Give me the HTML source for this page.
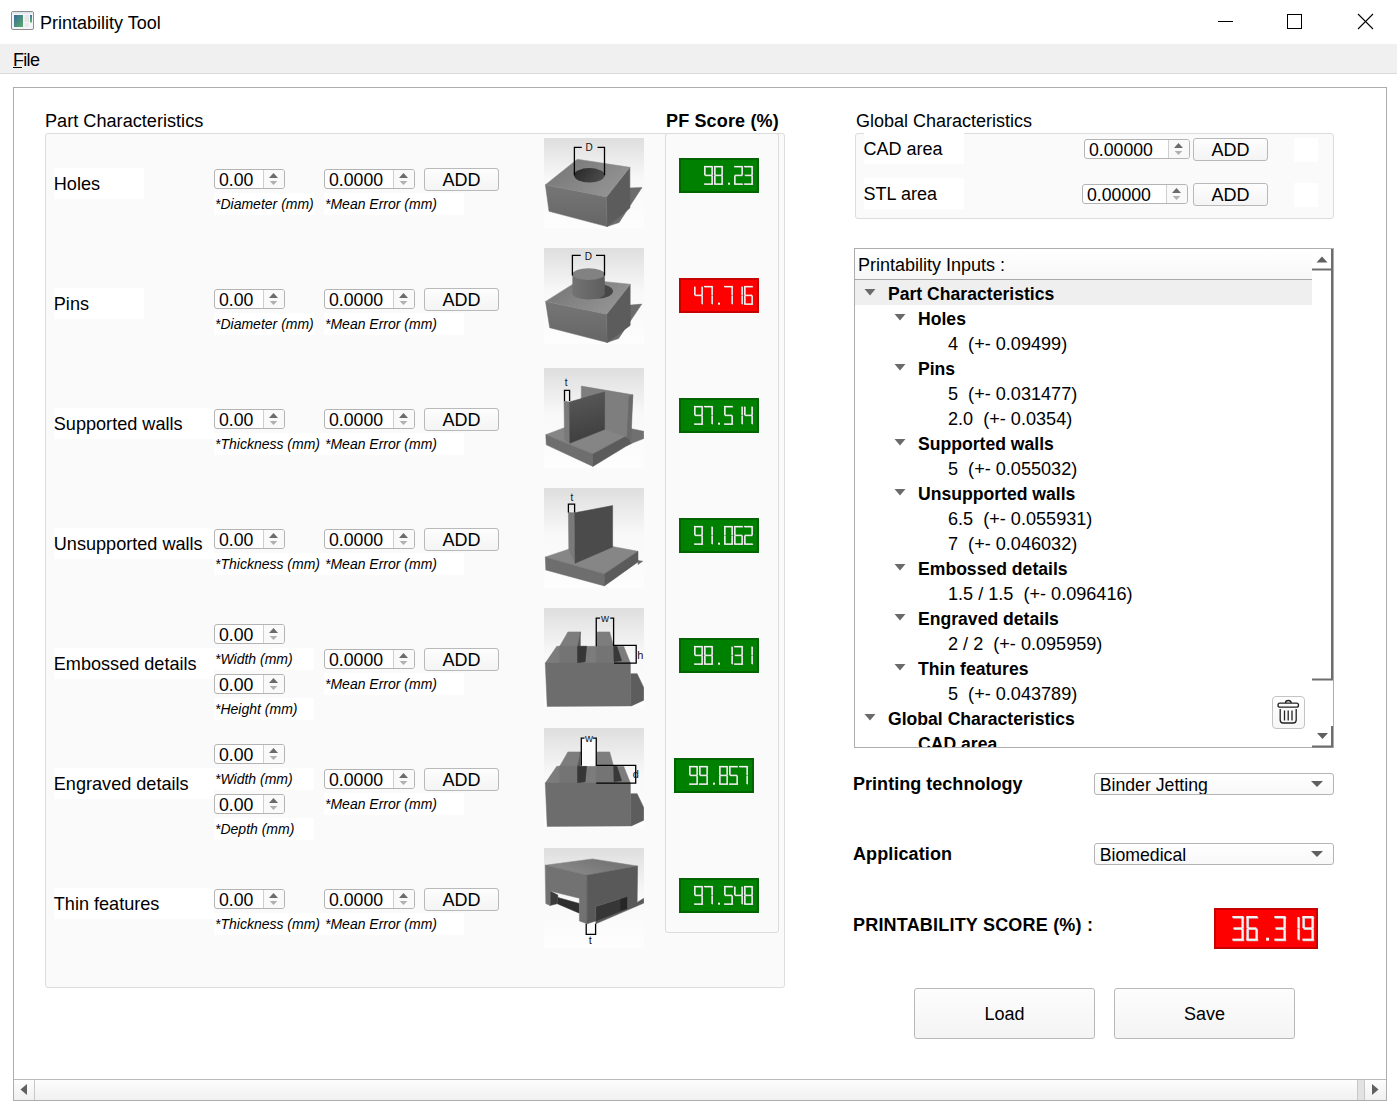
<!DOCTYPE html><html><head><meta charset="utf-8"><style>
html,body{margin:0;padding:0;}
body{width:1397px;height:1113px;position:relative;overflow:hidden;background:#fff;font-family:'Liberation Sans',sans-serif;}
.t{position:absolute;white-space:nowrap;line-height:normal;font-family:'Liberation Sans',sans-serif;}
.spin{position:absolute;box-sizing:border-box;border:1px solid #b4b4b4;border-radius:3px;background:#fff;}
.btn{position:absolute;box-sizing:border-box;border:1px solid #b9b9b9;background:linear-gradient(#fdfdfd,#f4f4f4);text-align:center;color:#000;font-family:'Liberation Sans',sans-serif;}
</style></head><body>

<svg style="position:absolute;left:0;top:0" width="1397" height="44"><defs><linearGradient id="ig" x1="0" y1="0" x2="1" y2="1"><stop offset="0" stop-color="#3a6a9c"/><stop offset="1" stop-color="#58ad68"/></linearGradient><linearGradient id="ig2" x1="0" y1="0" x2="0" y2="1"><stop offset="0" stop-color="#3f6fa8"/><stop offset="1" stop-color="#5fb86a"/></linearGradient></defs><rect x="11.5" y="11.5" width="22" height="18" rx="1.5" fill="#f4f5f8" stroke="#8c8c8c" stroke-width="1"/><rect x="12" y="12" width="21" height="1.6" fill="#dde3ea"/><rect x="14" y="15" width="9" height="12" fill="url(#ig)"/><rect x="24.5" y="15" width="4.5" height="7" fill="#e6e6e6"/><rect x="24.5" y="23" width="4.5" height="4" fill="#e9e9e9"/><rect x="30" y="15" width="2" height="7.5" fill="url(#ig2)"/><line x1="1218" y1="21.5" x2="1233" y2="21.5" stroke="#000" stroke-width="1"/><rect x="1287.5" y="14.5" width="14" height="14" fill="none" stroke="#000" stroke-width="1"/><line x1="1358" y1="14" x2="1373" y2="29" stroke="#000" stroke-width="1.1"/><line x1="1373" y1="14" x2="1358" y2="29" stroke="#000" stroke-width="1.1"/></svg>
<div class="t" style="left:40px;top:13px;font-size:18px;font-weight:normal;font-style:normal;color:#000;">Printability Tool</div>
<div style="position:absolute;left:0px;top:44px;width:1397px;height:30px;box-sizing:border-box;background:#f0f0f0;border-bottom:1px solid #d9d9d9"></div>
<div class="t" style="left:13px;top:50px;font-size:18px;font-weight:normal;font-style:normal;color:#000;letter-spacing:-0.7px">File</div>
<div style="position:absolute;left:13px;top:67px;width:9px;height:1px;box-sizing:border-box;background:#000"></div>
<div style="position:absolute;left:13px;top:87px;width:1374px;height:1014px;box-sizing:border-box;border:1px solid #adadad;background:#fff"></div>
<div style="position:absolute;left:14px;top:1079px;width:1372px;height:21px;box-sizing:border-box;border-top:1px solid #b9b9b9;background:linear-gradient(#fdfdfd,#f0f0f0)"></div>
<div style="position:absolute;left:34px;top:1080px;width:1px;height:20px;box-sizing:border-box;background:#c8c8c8"></div>
<div style="position:absolute;left:1357px;top:1080px;width:8px;height:20px;box-sizing:border-box;background:#e2e2e2;border-left:1px solid #c8c8c8;border-right:1px solid #c8c8c8"></div>
<svg style="position:absolute;left:0;top:0;overflow:visible" width="1" height="1"><polygon points="20.5,1089.5 27,1084 27,1095" fill="#606060"/><polygon points="1378.5,1089.5 1372,1084 1372,1095" fill="#606060"/></svg>
<div class="t" style="left:45px;top:111px;font-size:18.15px;font-weight:normal;font-style:normal;color:#000;">Part Characteristics</div>
<div style="position:absolute;left:45px;top:133px;width:740px;height:855px;box-sizing:border-box;border:1px solid #dcdcdc;border-radius:3px;background:#fafafa"></div>
<div class="t" style="left:666px;top:111px;font-size:18px;font-weight:bold;font-style:normal;color:#000;letter-spacing:0.15px">PF Score (%)</div>
<div style="position:absolute;left:665px;top:133px;width:114px;height:800px;box-sizing:border-box;border:1px solid #dcdcdc;border-radius:3px;background:#fafafa"></div>
<div style="position:absolute;left:54px;top:168px;width:90px;height:31px;box-sizing:border-box;background:#fff"></div>
<div class="t" style="left:53.8px;top:174px;font-size:18.1px;font-weight:normal;font-style:normal;color:#000;">Holes</div>
<div style="position:absolute;left:214px;top:193px;width:100px;height:22px;box-sizing:border-box;background:#fff"></div>
<div class="spin" style="left:214px;top:169px;width:71px;height:20px"></div>
<div style="position:absolute;left:263px;top:170px;width:1px;height:18px;background:#cfcfcf"></div>
<div style="position:absolute;left:264px;top:170px;width:20px;height:18px;background:#f9f9f9;border-radius:0 2px 2px 0"></div>
<svg style="position:absolute;left:0;top:0;overflow:visible" width="1" height="1"><polygon points="269.0,178.0 278.0,178.0 273.5,173.0" fill="#6a6a6a"/><polygon points="269.7,181.0 277.3,181.0 273.5,185.0" fill="#b0b0b0"/></svg>
<div class="t" style="left:219px;top:170px;font-size:17.7px;font-weight:normal;font-style:normal;color:#000;">0.00</div>
<div class="t" style="left:215px;top:196px;font-size:14px;font-weight:normal;font-style:italic;color:#000;">*Diameter (mm)</div>
<div style="position:absolute;left:324px;top:193px;width:140px;height:22px;box-sizing:border-box;background:#fff"></div>
<div class="spin" style="left:324px;top:169px;width:91px;height:20px"></div>
<div style="position:absolute;left:393px;top:170px;width:1px;height:18px;background:#cfcfcf"></div>
<div style="position:absolute;left:394px;top:170px;width:20px;height:18px;background:#f9f9f9;border-radius:0 2px 2px 0"></div>
<svg style="position:absolute;left:0;top:0;overflow:visible" width="1" height="1"><polygon points="399.0,178.0 408.0,178.0 403.5,173.0" fill="#6a6a6a"/><polygon points="399.7,181.0 407.3,181.0 403.5,185.0" fill="#b0b0b0"/></svg>
<div class="t" style="left:329px;top:170px;font-size:17.7px;font-weight:normal;font-style:normal;color:#000;">0.0000</div>
<div class="t" style="left:325px;top:196px;font-size:14px;font-weight:normal;font-style:italic;color:#000;">*Mean Error (mm)</div>
<div class="btn" style="left:424px;top:168px;width:75px;height:23px;line-height:23px;font-size:18px;border-radius:3px">ADD</div>
<div style="position:absolute;left:679px;top:158px;width:80px;height:35px;box-sizing:border-box;background:#008000;border:2px solid rgba(0,0,0,0.22)"></div>
<svg style="position:absolute;left:679px;top:158px" width="80" height="35"><line x1="25.50" y1="8.97" x2="34.15" y2="8.97" stroke="#c4c0c8" stroke-width="1.08"/><line x1="33.47" y1="8.97" x2="33.47" y2="17.42" stroke="#c4c0c8" stroke-width="1.08"/><line x1="33.47" y1="18.02" x2="33.47" y2="26.47" stroke="#c4c0c8" stroke-width="1.08"/><line x1="25.50" y1="26.47" x2="34.15" y2="26.47" stroke="#c4c0c8" stroke-width="1.08"/><line x1="26.17" y1="8.97" x2="26.17" y2="17.42" stroke="#c4c0c8" stroke-width="1.08"/><line x1="26.17" y1="17.72" x2="33.47" y2="17.72" stroke="#c4c0c8" stroke-width="1.08"/><line x1="25.02" y1="8.50" x2="33.67" y2="8.50" stroke="#f3f3f3" stroke-width="1.22"/><line x1="33.00" y1="8.50" x2="33.00" y2="16.95" stroke="#f3f3f3" stroke-width="1.22"/><line x1="33.00" y1="17.55" x2="33.00" y2="26.00" stroke="#f3f3f3" stroke-width="1.22"/><line x1="25.02" y1="26.00" x2="33.67" y2="26.00" stroke="#f3f3f3" stroke-width="1.22"/><line x1="25.70" y1="8.50" x2="25.70" y2="16.95" stroke="#f3f3f3" stroke-width="1.22"/><line x1="25.70" y1="17.25" x2="33.00" y2="17.25" stroke="#f3f3f3" stroke-width="1.22"/><line x1="35.50" y1="8.97" x2="44.15" y2="8.97" stroke="#c4c0c8" stroke-width="1.08"/><line x1="43.47" y1="8.97" x2="43.47" y2="17.42" stroke="#c4c0c8" stroke-width="1.08"/><line x1="43.47" y1="18.02" x2="43.47" y2="26.47" stroke="#c4c0c8" stroke-width="1.08"/><line x1="35.50" y1="26.47" x2="44.15" y2="26.47" stroke="#c4c0c8" stroke-width="1.08"/><line x1="36.17" y1="18.02" x2="36.17" y2="26.47" stroke="#c4c0c8" stroke-width="1.08"/><line x1="36.17" y1="8.97" x2="36.17" y2="17.42" stroke="#c4c0c8" stroke-width="1.08"/><line x1="36.17" y1="17.72" x2="43.47" y2="17.72" stroke="#c4c0c8" stroke-width="1.08"/><line x1="35.03" y1="8.50" x2="43.67" y2="8.50" stroke="#f3f3f3" stroke-width="1.22"/><line x1="43.00" y1="8.50" x2="43.00" y2="16.95" stroke="#f3f3f3" stroke-width="1.22"/><line x1="43.00" y1="17.55" x2="43.00" y2="26.00" stroke="#f3f3f3" stroke-width="1.22"/><line x1="35.03" y1="26.00" x2="43.67" y2="26.00" stroke="#f3f3f3" stroke-width="1.22"/><line x1="35.70" y1="17.55" x2="35.70" y2="26.00" stroke="#f3f3f3" stroke-width="1.22"/><line x1="35.70" y1="8.50" x2="35.70" y2="16.95" stroke="#f3f3f3" stroke-width="1.22"/><line x1="35.70" y1="17.25" x2="43.00" y2="17.25" stroke="#f3f3f3" stroke-width="1.22"/><rect x="49.00" y="24.68" width="2" height="2" fill="#f3f3f3"/><line x1="55.50" y1="8.97" x2="64.15" y2="8.97" stroke="#c4c0c8" stroke-width="1.08"/><line x1="63.47" y1="8.97" x2="63.47" y2="17.42" stroke="#c4c0c8" stroke-width="1.08"/><line x1="56.17" y1="17.72" x2="63.47" y2="17.72" stroke="#c4c0c8" stroke-width="1.08"/><line x1="56.17" y1="18.02" x2="56.17" y2="26.47" stroke="#c4c0c8" stroke-width="1.08"/><line x1="55.50" y1="26.47" x2="64.15" y2="26.47" stroke="#c4c0c8" stroke-width="1.08"/><line x1="55.03" y1="8.50" x2="63.67" y2="8.50" stroke="#f3f3f3" stroke-width="1.22"/><line x1="63.00" y1="8.50" x2="63.00" y2="16.95" stroke="#f3f3f3" stroke-width="1.22"/><line x1="55.70" y1="17.25" x2="63.00" y2="17.25" stroke="#f3f3f3" stroke-width="1.22"/><line x1="55.70" y1="17.55" x2="55.70" y2="26.00" stroke="#f3f3f3" stroke-width="1.22"/><line x1="55.03" y1="26.00" x2="63.67" y2="26.00" stroke="#f3f3f3" stroke-width="1.22"/><line x1="65.50" y1="8.97" x2="74.15" y2="8.97" stroke="#c4c0c8" stroke-width="1.08"/><line x1="73.47" y1="8.97" x2="73.47" y2="17.42" stroke="#c4c0c8" stroke-width="1.08"/><line x1="66.17" y1="17.72" x2="73.47" y2="17.72" stroke="#c4c0c8" stroke-width="1.08"/><line x1="73.47" y1="18.02" x2="73.47" y2="26.47" stroke="#c4c0c8" stroke-width="1.08"/><line x1="65.50" y1="26.47" x2="74.15" y2="26.47" stroke="#c4c0c8" stroke-width="1.08"/><line x1="65.03" y1="8.50" x2="73.67" y2="8.50" stroke="#f3f3f3" stroke-width="1.22"/><line x1="73.00" y1="8.50" x2="73.00" y2="16.95" stroke="#f3f3f3" stroke-width="1.22"/><line x1="65.70" y1="17.25" x2="73.00" y2="17.25" stroke="#f3f3f3" stroke-width="1.22"/><line x1="73.00" y1="17.55" x2="73.00" y2="26.00" stroke="#f3f3f3" stroke-width="1.22"/><line x1="65.03" y1="26.00" x2="73.67" y2="26.00" stroke="#f3f3f3" stroke-width="1.22"/></svg>
<div style="position:absolute;left:54px;top:288px;width:90px;height:31px;box-sizing:border-box;background:#fff"></div>
<div class="t" style="left:53.8px;top:294px;font-size:18.1px;font-weight:normal;font-style:normal;color:#000;">Pins</div>
<div style="position:absolute;left:214px;top:313px;width:100px;height:22px;box-sizing:border-box;background:#fff"></div>
<div class="spin" style="left:214px;top:289px;width:71px;height:20px"></div>
<div style="position:absolute;left:263px;top:290px;width:1px;height:18px;background:#cfcfcf"></div>
<div style="position:absolute;left:264px;top:290px;width:20px;height:18px;background:#f9f9f9;border-radius:0 2px 2px 0"></div>
<svg style="position:absolute;left:0;top:0;overflow:visible" width="1" height="1"><polygon points="269.0,298.0 278.0,298.0 273.5,293.0" fill="#6a6a6a"/><polygon points="269.7,301.0 277.3,301.0 273.5,305.0" fill="#b0b0b0"/></svg>
<div class="t" style="left:219px;top:290px;font-size:17.7px;font-weight:normal;font-style:normal;color:#000;">0.00</div>
<div class="t" style="left:215px;top:316px;font-size:14px;font-weight:normal;font-style:italic;color:#000;">*Diameter (mm)</div>
<div style="position:absolute;left:324px;top:313px;width:140px;height:22px;box-sizing:border-box;background:#fff"></div>
<div class="spin" style="left:324px;top:289px;width:91px;height:20px"></div>
<div style="position:absolute;left:393px;top:290px;width:1px;height:18px;background:#cfcfcf"></div>
<div style="position:absolute;left:394px;top:290px;width:20px;height:18px;background:#f9f9f9;border-radius:0 2px 2px 0"></div>
<svg style="position:absolute;left:0;top:0;overflow:visible" width="1" height="1"><polygon points="399.0,298.0 408.0,298.0 403.5,293.0" fill="#6a6a6a"/><polygon points="399.7,301.0 407.3,301.0 403.5,305.0" fill="#b0b0b0"/></svg>
<div class="t" style="left:329px;top:290px;font-size:17.7px;font-weight:normal;font-style:normal;color:#000;">0.0000</div>
<div class="t" style="left:325px;top:316px;font-size:14px;font-weight:normal;font-style:italic;color:#000;">*Mean Error (mm)</div>
<div class="btn" style="left:424px;top:288px;width:75px;height:23px;line-height:23px;font-size:18px;border-radius:3px">ADD</div>
<div style="position:absolute;left:679px;top:278px;width:80px;height:35px;box-sizing:border-box;background:#ff0000;border:2px solid rgba(0,0,0,0.22)"></div>
<svg style="position:absolute;left:679px;top:278px" width="80" height="35"><line x1="16.17" y1="8.97" x2="16.17" y2="17.42" stroke="#c4c0c8" stroke-width="1.08"/><line x1="16.17" y1="17.72" x2="23.47" y2="17.72" stroke="#c4c0c8" stroke-width="1.08"/><line x1="23.47" y1="8.97" x2="23.47" y2="17.42" stroke="#c4c0c8" stroke-width="1.08"/><line x1="23.47" y1="18.02" x2="23.47" y2="26.47" stroke="#c4c0c8" stroke-width="1.08"/><line x1="15.70" y1="8.50" x2="15.70" y2="16.95" stroke="#f3f3f3" stroke-width="1.22"/><line x1="15.70" y1="17.25" x2="23.00" y2="17.25" stroke="#f3f3f3" stroke-width="1.22"/><line x1="23.00" y1="8.50" x2="23.00" y2="16.95" stroke="#f3f3f3" stroke-width="1.22"/><line x1="23.00" y1="17.55" x2="23.00" y2="26.00" stroke="#f3f3f3" stroke-width="1.22"/><line x1="25.50" y1="8.97" x2="34.15" y2="8.97" stroke="#c4c0c8" stroke-width="1.08"/><line x1="33.47" y1="8.97" x2="33.47" y2="17.42" stroke="#c4c0c8" stroke-width="1.08"/><line x1="33.47" y1="18.02" x2="33.47" y2="26.47" stroke="#c4c0c8" stroke-width="1.08"/><line x1="25.02" y1="8.50" x2="33.67" y2="8.50" stroke="#f3f3f3" stroke-width="1.22"/><line x1="33.00" y1="8.50" x2="33.00" y2="16.95" stroke="#f3f3f3" stroke-width="1.22"/><line x1="33.00" y1="17.55" x2="33.00" y2="26.00" stroke="#f3f3f3" stroke-width="1.22"/><rect x="39.00" y="24.68" width="2" height="2" fill="#f3f3f3"/><line x1="45.50" y1="8.97" x2="54.15" y2="8.97" stroke="#c4c0c8" stroke-width="1.08"/><line x1="53.47" y1="8.97" x2="53.47" y2="17.42" stroke="#c4c0c8" stroke-width="1.08"/><line x1="53.47" y1="18.02" x2="53.47" y2="26.47" stroke="#c4c0c8" stroke-width="1.08"/><line x1="45.03" y1="8.50" x2="53.67" y2="8.50" stroke="#f3f3f3" stroke-width="1.22"/><line x1="53.00" y1="8.50" x2="53.00" y2="16.95" stroke="#f3f3f3" stroke-width="1.22"/><line x1="53.00" y1="17.55" x2="53.00" y2="26.00" stroke="#f3f3f3" stroke-width="1.22"/><line x1="63.47" y1="8.97" x2="63.47" y2="17.42" stroke="#c4c0c8" stroke-width="1.08"/><line x1="63.47" y1="18.02" x2="63.47" y2="26.47" stroke="#c4c0c8" stroke-width="1.08"/><line x1="63.00" y1="8.50" x2="63.00" y2="16.95" stroke="#f3f3f3" stroke-width="1.22"/><line x1="63.00" y1="17.55" x2="63.00" y2="26.00" stroke="#f3f3f3" stroke-width="1.22"/><line x1="65.50" y1="8.97" x2="74.15" y2="8.97" stroke="#c4c0c8" stroke-width="1.08"/><line x1="66.17" y1="8.97" x2="66.17" y2="17.42" stroke="#c4c0c8" stroke-width="1.08"/><line x1="66.17" y1="17.72" x2="73.47" y2="17.72" stroke="#c4c0c8" stroke-width="1.08"/><line x1="66.17" y1="18.02" x2="66.17" y2="26.47" stroke="#c4c0c8" stroke-width="1.08"/><line x1="65.50" y1="26.47" x2="74.15" y2="26.47" stroke="#c4c0c8" stroke-width="1.08"/><line x1="73.47" y1="18.02" x2="73.47" y2="26.47" stroke="#c4c0c8" stroke-width="1.08"/><line x1="65.03" y1="8.50" x2="73.67" y2="8.50" stroke="#f3f3f3" stroke-width="1.22"/><line x1="65.70" y1="8.50" x2="65.70" y2="16.95" stroke="#f3f3f3" stroke-width="1.22"/><line x1="65.70" y1="17.25" x2="73.00" y2="17.25" stroke="#f3f3f3" stroke-width="1.22"/><line x1="65.70" y1="17.55" x2="65.70" y2="26.00" stroke="#f3f3f3" stroke-width="1.22"/><line x1="65.03" y1="26.00" x2="73.67" y2="26.00" stroke="#f3f3f3" stroke-width="1.22"/><line x1="73.00" y1="17.55" x2="73.00" y2="26.00" stroke="#f3f3f3" stroke-width="1.22"/></svg>
<div style="position:absolute;left:54px;top:408px;width:160px;height:31px;box-sizing:border-box;background:#fff"></div>
<div class="t" style="left:53.8px;top:414px;font-size:18.1px;font-weight:normal;font-style:normal;color:#000;">Supported walls</div>
<div style="position:absolute;left:214px;top:433px;width:110px;height:22px;box-sizing:border-box;background:#fff"></div>
<div class="spin" style="left:214px;top:409px;width:71px;height:20px"></div>
<div style="position:absolute;left:263px;top:410px;width:1px;height:18px;background:#cfcfcf"></div>
<div style="position:absolute;left:264px;top:410px;width:20px;height:18px;background:#f9f9f9;border-radius:0 2px 2px 0"></div>
<svg style="position:absolute;left:0;top:0;overflow:visible" width="1" height="1"><polygon points="269.0,418.0 278.0,418.0 273.5,413.0" fill="#6a6a6a"/><polygon points="269.7,421.0 277.3,421.0 273.5,425.0" fill="#b0b0b0"/></svg>
<div class="t" style="left:219px;top:410px;font-size:17.7px;font-weight:normal;font-style:normal;color:#000;">0.00</div>
<div class="t" style="left:215px;top:436px;font-size:14px;font-weight:normal;font-style:italic;color:#000;">*Thickness (mm)</div>
<div style="position:absolute;left:324px;top:433px;width:140px;height:22px;box-sizing:border-box;background:#fff"></div>
<div class="spin" style="left:324px;top:409px;width:91px;height:20px"></div>
<div style="position:absolute;left:393px;top:410px;width:1px;height:18px;background:#cfcfcf"></div>
<div style="position:absolute;left:394px;top:410px;width:20px;height:18px;background:#f9f9f9;border-radius:0 2px 2px 0"></div>
<svg style="position:absolute;left:0;top:0;overflow:visible" width="1" height="1"><polygon points="399.0,418.0 408.0,418.0 403.5,413.0" fill="#6a6a6a"/><polygon points="399.7,421.0 407.3,421.0 403.5,425.0" fill="#b0b0b0"/></svg>
<div class="t" style="left:329px;top:410px;font-size:17.7px;font-weight:normal;font-style:normal;color:#000;">0.0000</div>
<div class="t" style="left:325px;top:436px;font-size:14px;font-weight:normal;font-style:italic;color:#000;">*Mean Error (mm)</div>
<div class="btn" style="left:424px;top:408px;width:75px;height:23px;line-height:23px;font-size:18px;border-radius:3px">ADD</div>
<div style="position:absolute;left:679px;top:398px;width:80px;height:35px;box-sizing:border-box;background:#008000;border:2px solid rgba(0,0,0,0.22)"></div>
<svg style="position:absolute;left:679px;top:398px" width="80" height="35"><line x1="15.50" y1="8.97" x2="24.15" y2="8.97" stroke="#c4c0c8" stroke-width="1.08"/><line x1="23.47" y1="8.97" x2="23.47" y2="17.42" stroke="#c4c0c8" stroke-width="1.08"/><line x1="23.47" y1="18.02" x2="23.47" y2="26.47" stroke="#c4c0c8" stroke-width="1.08"/><line x1="15.50" y1="26.47" x2="24.15" y2="26.47" stroke="#c4c0c8" stroke-width="1.08"/><line x1="16.17" y1="8.97" x2="16.17" y2="17.42" stroke="#c4c0c8" stroke-width="1.08"/><line x1="16.17" y1="17.72" x2="23.47" y2="17.72" stroke="#c4c0c8" stroke-width="1.08"/><line x1="15.02" y1="8.50" x2="23.68" y2="8.50" stroke="#f3f3f3" stroke-width="1.22"/><line x1="23.00" y1="8.50" x2="23.00" y2="16.95" stroke="#f3f3f3" stroke-width="1.22"/><line x1="23.00" y1="17.55" x2="23.00" y2="26.00" stroke="#f3f3f3" stroke-width="1.22"/><line x1="15.02" y1="26.00" x2="23.68" y2="26.00" stroke="#f3f3f3" stroke-width="1.22"/><line x1="15.70" y1="8.50" x2="15.70" y2="16.95" stroke="#f3f3f3" stroke-width="1.22"/><line x1="15.70" y1="17.25" x2="23.00" y2="17.25" stroke="#f3f3f3" stroke-width="1.22"/><line x1="25.50" y1="8.97" x2="34.15" y2="8.97" stroke="#c4c0c8" stroke-width="1.08"/><line x1="33.47" y1="8.97" x2="33.47" y2="17.42" stroke="#c4c0c8" stroke-width="1.08"/><line x1="33.47" y1="18.02" x2="33.47" y2="26.47" stroke="#c4c0c8" stroke-width="1.08"/><line x1="25.02" y1="8.50" x2="33.67" y2="8.50" stroke="#f3f3f3" stroke-width="1.22"/><line x1="33.00" y1="8.50" x2="33.00" y2="16.95" stroke="#f3f3f3" stroke-width="1.22"/><line x1="33.00" y1="17.55" x2="33.00" y2="26.00" stroke="#f3f3f3" stroke-width="1.22"/><rect x="39.00" y="24.68" width="2" height="2" fill="#f3f3f3"/><line x1="45.50" y1="8.97" x2="54.15" y2="8.97" stroke="#c4c0c8" stroke-width="1.08"/><line x1="46.17" y1="8.97" x2="46.17" y2="17.42" stroke="#c4c0c8" stroke-width="1.08"/><line x1="46.17" y1="17.72" x2="53.47" y2="17.72" stroke="#c4c0c8" stroke-width="1.08"/><line x1="53.47" y1="18.02" x2="53.47" y2="26.47" stroke="#c4c0c8" stroke-width="1.08"/><line x1="45.50" y1="26.47" x2="54.15" y2="26.47" stroke="#c4c0c8" stroke-width="1.08"/><line x1="45.03" y1="8.50" x2="53.67" y2="8.50" stroke="#f3f3f3" stroke-width="1.22"/><line x1="45.70" y1="8.50" x2="45.70" y2="16.95" stroke="#f3f3f3" stroke-width="1.22"/><line x1="45.70" y1="17.25" x2="53.00" y2="17.25" stroke="#f3f3f3" stroke-width="1.22"/><line x1="53.00" y1="17.55" x2="53.00" y2="26.00" stroke="#f3f3f3" stroke-width="1.22"/><line x1="45.03" y1="26.00" x2="53.67" y2="26.00" stroke="#f3f3f3" stroke-width="1.22"/><line x1="63.47" y1="8.97" x2="63.47" y2="17.42" stroke="#c4c0c8" stroke-width="1.08"/><line x1="63.47" y1="18.02" x2="63.47" y2="26.47" stroke="#c4c0c8" stroke-width="1.08"/><line x1="63.00" y1="8.50" x2="63.00" y2="16.95" stroke="#f3f3f3" stroke-width="1.22"/><line x1="63.00" y1="17.55" x2="63.00" y2="26.00" stroke="#f3f3f3" stroke-width="1.22"/><line x1="66.17" y1="8.97" x2="66.17" y2="17.42" stroke="#c4c0c8" stroke-width="1.08"/><line x1="66.17" y1="17.72" x2="73.47" y2="17.72" stroke="#c4c0c8" stroke-width="1.08"/><line x1="73.47" y1="8.97" x2="73.47" y2="17.42" stroke="#c4c0c8" stroke-width="1.08"/><line x1="73.47" y1="18.02" x2="73.47" y2="26.47" stroke="#c4c0c8" stroke-width="1.08"/><line x1="65.70" y1="8.50" x2="65.70" y2="16.95" stroke="#f3f3f3" stroke-width="1.22"/><line x1="65.70" y1="17.25" x2="73.00" y2="17.25" stroke="#f3f3f3" stroke-width="1.22"/><line x1="73.00" y1="8.50" x2="73.00" y2="16.95" stroke="#f3f3f3" stroke-width="1.22"/><line x1="73.00" y1="17.55" x2="73.00" y2="26.00" stroke="#f3f3f3" stroke-width="1.22"/></svg>
<div style="position:absolute;left:54px;top:528px;width:160px;height:31px;box-sizing:border-box;background:#fff"></div>
<div class="t" style="left:53.8px;top:534px;font-size:18.1px;font-weight:normal;font-style:normal;color:#000;">Unsupported walls</div>
<div style="position:absolute;left:214px;top:553px;width:110px;height:22px;box-sizing:border-box;background:#fff"></div>
<div class="spin" style="left:214px;top:529px;width:71px;height:20px"></div>
<div style="position:absolute;left:263px;top:530px;width:1px;height:18px;background:#cfcfcf"></div>
<div style="position:absolute;left:264px;top:530px;width:20px;height:18px;background:#f9f9f9;border-radius:0 2px 2px 0"></div>
<svg style="position:absolute;left:0;top:0;overflow:visible" width="1" height="1"><polygon points="269.0,538.0 278.0,538.0 273.5,533.0" fill="#6a6a6a"/><polygon points="269.7,541.0 277.3,541.0 273.5,545.0" fill="#b0b0b0"/></svg>
<div class="t" style="left:219px;top:530px;font-size:17.7px;font-weight:normal;font-style:normal;color:#000;">0.00</div>
<div class="t" style="left:215px;top:556px;font-size:14px;font-weight:normal;font-style:italic;color:#000;">*Thickness (mm)</div>
<div style="position:absolute;left:324px;top:553px;width:140px;height:22px;box-sizing:border-box;background:#fff"></div>
<div class="spin" style="left:324px;top:529px;width:91px;height:20px"></div>
<div style="position:absolute;left:393px;top:530px;width:1px;height:18px;background:#cfcfcf"></div>
<div style="position:absolute;left:394px;top:530px;width:20px;height:18px;background:#f9f9f9;border-radius:0 2px 2px 0"></div>
<svg style="position:absolute;left:0;top:0;overflow:visible" width="1" height="1"><polygon points="399.0,538.0 408.0,538.0 403.5,533.0" fill="#6a6a6a"/><polygon points="399.7,541.0 407.3,541.0 403.5,545.0" fill="#b0b0b0"/></svg>
<div class="t" style="left:329px;top:530px;font-size:17.7px;font-weight:normal;font-style:normal;color:#000;">0.0000</div>
<div class="t" style="left:325px;top:556px;font-size:14px;font-weight:normal;font-style:italic;color:#000;">*Mean Error (mm)</div>
<div class="btn" style="left:424px;top:528px;width:75px;height:23px;line-height:23px;font-size:18px;border-radius:3px">ADD</div>
<div style="position:absolute;left:679px;top:518px;width:80px;height:35px;box-sizing:border-box;background:#008000;border:2px solid rgba(0,0,0,0.22)"></div>
<svg style="position:absolute;left:679px;top:518px" width="80" height="35"><line x1="15.50" y1="8.97" x2="24.15" y2="8.97" stroke="#c4c0c8" stroke-width="1.08"/><line x1="23.47" y1="8.97" x2="23.47" y2="17.42" stroke="#c4c0c8" stroke-width="1.08"/><line x1="23.47" y1="18.02" x2="23.47" y2="26.47" stroke="#c4c0c8" stroke-width="1.08"/><line x1="15.50" y1="26.47" x2="24.15" y2="26.47" stroke="#c4c0c8" stroke-width="1.08"/><line x1="16.17" y1="8.97" x2="16.17" y2="17.42" stroke="#c4c0c8" stroke-width="1.08"/><line x1="16.17" y1="17.72" x2="23.47" y2="17.72" stroke="#c4c0c8" stroke-width="1.08"/><line x1="15.02" y1="8.50" x2="23.68" y2="8.50" stroke="#f3f3f3" stroke-width="1.22"/><line x1="23.00" y1="8.50" x2="23.00" y2="16.95" stroke="#f3f3f3" stroke-width="1.22"/><line x1="23.00" y1="17.55" x2="23.00" y2="26.00" stroke="#f3f3f3" stroke-width="1.22"/><line x1="15.02" y1="26.00" x2="23.68" y2="26.00" stroke="#f3f3f3" stroke-width="1.22"/><line x1="15.70" y1="8.50" x2="15.70" y2="16.95" stroke="#f3f3f3" stroke-width="1.22"/><line x1="15.70" y1="17.25" x2="23.00" y2="17.25" stroke="#f3f3f3" stroke-width="1.22"/><line x1="33.47" y1="8.97" x2="33.47" y2="17.42" stroke="#c4c0c8" stroke-width="1.08"/><line x1="33.47" y1="18.02" x2="33.47" y2="26.47" stroke="#c4c0c8" stroke-width="1.08"/><line x1="33.00" y1="8.50" x2="33.00" y2="16.95" stroke="#f3f3f3" stroke-width="1.22"/><line x1="33.00" y1="17.55" x2="33.00" y2="26.00" stroke="#f3f3f3" stroke-width="1.22"/><rect x="39.00" y="24.68" width="2" height="2" fill="#f3f3f3"/><line x1="45.50" y1="8.97" x2="54.15" y2="8.97" stroke="#c4c0c8" stroke-width="1.08"/><line x1="53.47" y1="8.97" x2="53.47" y2="17.42" stroke="#c4c0c8" stroke-width="1.08"/><line x1="53.47" y1="18.02" x2="53.47" y2="26.47" stroke="#c4c0c8" stroke-width="1.08"/><line x1="45.50" y1="26.47" x2="54.15" y2="26.47" stroke="#c4c0c8" stroke-width="1.08"/><line x1="46.17" y1="18.02" x2="46.17" y2="26.47" stroke="#c4c0c8" stroke-width="1.08"/><line x1="46.17" y1="8.97" x2="46.17" y2="17.42" stroke="#c4c0c8" stroke-width="1.08"/><line x1="45.03" y1="8.50" x2="53.67" y2="8.50" stroke="#f3f3f3" stroke-width="1.22"/><line x1="53.00" y1="8.50" x2="53.00" y2="16.95" stroke="#f3f3f3" stroke-width="1.22"/><line x1="53.00" y1="17.55" x2="53.00" y2="26.00" stroke="#f3f3f3" stroke-width="1.22"/><line x1="45.03" y1="26.00" x2="53.67" y2="26.00" stroke="#f3f3f3" stroke-width="1.22"/><line x1="45.70" y1="17.55" x2="45.70" y2="26.00" stroke="#f3f3f3" stroke-width="1.22"/><line x1="45.70" y1="8.50" x2="45.70" y2="16.95" stroke="#f3f3f3" stroke-width="1.22"/><line x1="55.50" y1="8.97" x2="64.15" y2="8.97" stroke="#c4c0c8" stroke-width="1.08"/><line x1="56.17" y1="8.97" x2="56.17" y2="17.42" stroke="#c4c0c8" stroke-width="1.08"/><line x1="56.17" y1="17.72" x2="63.47" y2="17.72" stroke="#c4c0c8" stroke-width="1.08"/><line x1="56.17" y1="18.02" x2="56.17" y2="26.47" stroke="#c4c0c8" stroke-width="1.08"/><line x1="55.50" y1="26.47" x2="64.15" y2="26.47" stroke="#c4c0c8" stroke-width="1.08"/><line x1="63.47" y1="18.02" x2="63.47" y2="26.47" stroke="#c4c0c8" stroke-width="1.08"/><line x1="55.03" y1="8.50" x2="63.67" y2="8.50" stroke="#f3f3f3" stroke-width="1.22"/><line x1="55.70" y1="8.50" x2="55.70" y2="16.95" stroke="#f3f3f3" stroke-width="1.22"/><line x1="55.70" y1="17.25" x2="63.00" y2="17.25" stroke="#f3f3f3" stroke-width="1.22"/><line x1="55.70" y1="17.55" x2="55.70" y2="26.00" stroke="#f3f3f3" stroke-width="1.22"/><line x1="55.03" y1="26.00" x2="63.67" y2="26.00" stroke="#f3f3f3" stroke-width="1.22"/><line x1="63.00" y1="17.55" x2="63.00" y2="26.00" stroke="#f3f3f3" stroke-width="1.22"/><line x1="65.50" y1="8.97" x2="74.15" y2="8.97" stroke="#c4c0c8" stroke-width="1.08"/><line x1="73.47" y1="8.97" x2="73.47" y2="17.42" stroke="#c4c0c8" stroke-width="1.08"/><line x1="66.17" y1="17.72" x2="73.47" y2="17.72" stroke="#c4c0c8" stroke-width="1.08"/><line x1="66.17" y1="18.02" x2="66.17" y2="26.47" stroke="#c4c0c8" stroke-width="1.08"/><line x1="65.50" y1="26.47" x2="74.15" y2="26.47" stroke="#c4c0c8" stroke-width="1.08"/><line x1="65.03" y1="8.50" x2="73.67" y2="8.50" stroke="#f3f3f3" stroke-width="1.22"/><line x1="73.00" y1="8.50" x2="73.00" y2="16.95" stroke="#f3f3f3" stroke-width="1.22"/><line x1="65.70" y1="17.25" x2="73.00" y2="17.25" stroke="#f3f3f3" stroke-width="1.22"/><line x1="65.70" y1="17.55" x2="65.70" y2="26.00" stroke="#f3f3f3" stroke-width="1.22"/><line x1="65.03" y1="26.00" x2="73.67" y2="26.00" stroke="#f3f3f3" stroke-width="1.22"/></svg>
<div style="position:absolute;left:54px;top:648px;width:160px;height:31px;box-sizing:border-box;background:#fff"></div>
<div class="t" style="left:53.8px;top:654px;font-size:18.1px;font-weight:normal;font-style:normal;color:#000;">Embossed details</div>
<div style="position:absolute;left:214px;top:648px;width:100px;height:22px;box-sizing:border-box;background:#fff"></div>
<div class="spin" style="left:214px;top:624px;width:71px;height:20px"></div>
<div style="position:absolute;left:263px;top:625px;width:1px;height:18px;background:#cfcfcf"></div>
<div style="position:absolute;left:264px;top:625px;width:20px;height:18px;background:#f9f9f9;border-radius:0 2px 2px 0"></div>
<svg style="position:absolute;left:0;top:0;overflow:visible" width="1" height="1"><polygon points="269.0,633.0 278.0,633.0 273.5,628.0" fill="#6a6a6a"/><polygon points="269.7,636.0 277.3,636.0 273.5,640.0" fill="#b0b0b0"/></svg>
<div class="t" style="left:219px;top:625px;font-size:17.7px;font-weight:normal;font-style:normal;color:#000;">0.00</div>
<div class="t" style="left:215px;top:651px;font-size:14px;font-weight:normal;font-style:italic;color:#000;">*Width (mm)</div>
<div style="position:absolute;left:214px;top:698px;width:100px;height:22px;box-sizing:border-box;background:#fff"></div>
<div class="spin" style="left:214px;top:674px;width:71px;height:20px"></div>
<div style="position:absolute;left:263px;top:675px;width:1px;height:18px;background:#cfcfcf"></div>
<div style="position:absolute;left:264px;top:675px;width:20px;height:18px;background:#f9f9f9;border-radius:0 2px 2px 0"></div>
<svg style="position:absolute;left:0;top:0;overflow:visible" width="1" height="1"><polygon points="269.0,683.0 278.0,683.0 273.5,678.0" fill="#6a6a6a"/><polygon points="269.7,686.0 277.3,686.0 273.5,690.0" fill="#b0b0b0"/></svg>
<div class="t" style="left:219px;top:675px;font-size:17.7px;font-weight:normal;font-style:normal;color:#000;">0.00</div>
<div class="t" style="left:215px;top:701px;font-size:14px;font-weight:normal;font-style:italic;color:#000;">*Height (mm)</div>
<div style="position:absolute;left:324px;top:673px;width:140px;height:22px;box-sizing:border-box;background:#fff"></div>
<div class="spin" style="left:324px;top:649px;width:91px;height:20px"></div>
<div style="position:absolute;left:393px;top:650px;width:1px;height:18px;background:#cfcfcf"></div>
<div style="position:absolute;left:394px;top:650px;width:20px;height:18px;background:#f9f9f9;border-radius:0 2px 2px 0"></div>
<svg style="position:absolute;left:0;top:0;overflow:visible" width="1" height="1"><polygon points="399.0,658.0 408.0,658.0 403.5,653.0" fill="#6a6a6a"/><polygon points="399.7,661.0 407.3,661.0 403.5,665.0" fill="#b0b0b0"/></svg>
<div class="t" style="left:329px;top:650px;font-size:17.7px;font-weight:normal;font-style:normal;color:#000;">0.0000</div>
<div class="t" style="left:325px;top:676px;font-size:14px;font-weight:normal;font-style:italic;color:#000;">*Mean Error (mm)</div>
<div class="btn" style="left:424px;top:648px;width:75px;height:23px;line-height:23px;font-size:18px;border-radius:3px">ADD</div>
<div style="position:absolute;left:679px;top:638px;width:80px;height:35px;box-sizing:border-box;background:#008000;border:2px solid rgba(0,0,0,0.22)"></div>
<svg style="position:absolute;left:679px;top:638px" width="80" height="35"><line x1="15.50" y1="8.97" x2="24.15" y2="8.97" stroke="#c4c0c8" stroke-width="1.08"/><line x1="23.47" y1="8.97" x2="23.47" y2="17.42" stroke="#c4c0c8" stroke-width="1.08"/><line x1="23.47" y1="18.02" x2="23.47" y2="26.47" stroke="#c4c0c8" stroke-width="1.08"/><line x1="15.50" y1="26.47" x2="24.15" y2="26.47" stroke="#c4c0c8" stroke-width="1.08"/><line x1="16.17" y1="8.97" x2="16.17" y2="17.42" stroke="#c4c0c8" stroke-width="1.08"/><line x1="16.17" y1="17.72" x2="23.47" y2="17.72" stroke="#c4c0c8" stroke-width="1.08"/><line x1="15.02" y1="8.50" x2="23.68" y2="8.50" stroke="#f3f3f3" stroke-width="1.22"/><line x1="23.00" y1="8.50" x2="23.00" y2="16.95" stroke="#f3f3f3" stroke-width="1.22"/><line x1="23.00" y1="17.55" x2="23.00" y2="26.00" stroke="#f3f3f3" stroke-width="1.22"/><line x1="15.02" y1="26.00" x2="23.68" y2="26.00" stroke="#f3f3f3" stroke-width="1.22"/><line x1="15.70" y1="8.50" x2="15.70" y2="16.95" stroke="#f3f3f3" stroke-width="1.22"/><line x1="15.70" y1="17.25" x2="23.00" y2="17.25" stroke="#f3f3f3" stroke-width="1.22"/><line x1="25.50" y1="8.97" x2="34.15" y2="8.97" stroke="#c4c0c8" stroke-width="1.08"/><line x1="33.47" y1="8.97" x2="33.47" y2="17.42" stroke="#c4c0c8" stroke-width="1.08"/><line x1="33.47" y1="18.02" x2="33.47" y2="26.47" stroke="#c4c0c8" stroke-width="1.08"/><line x1="25.50" y1="26.47" x2="34.15" y2="26.47" stroke="#c4c0c8" stroke-width="1.08"/><line x1="26.17" y1="18.02" x2="26.17" y2="26.47" stroke="#c4c0c8" stroke-width="1.08"/><line x1="26.17" y1="8.97" x2="26.17" y2="17.42" stroke="#c4c0c8" stroke-width="1.08"/><line x1="26.17" y1="17.72" x2="33.47" y2="17.72" stroke="#c4c0c8" stroke-width="1.08"/><line x1="25.02" y1="8.50" x2="33.67" y2="8.50" stroke="#f3f3f3" stroke-width="1.22"/><line x1="33.00" y1="8.50" x2="33.00" y2="16.95" stroke="#f3f3f3" stroke-width="1.22"/><line x1="33.00" y1="17.55" x2="33.00" y2="26.00" stroke="#f3f3f3" stroke-width="1.22"/><line x1="25.02" y1="26.00" x2="33.67" y2="26.00" stroke="#f3f3f3" stroke-width="1.22"/><line x1="25.70" y1="17.55" x2="25.70" y2="26.00" stroke="#f3f3f3" stroke-width="1.22"/><line x1="25.70" y1="8.50" x2="25.70" y2="16.95" stroke="#f3f3f3" stroke-width="1.22"/><line x1="25.70" y1="17.25" x2="33.00" y2="17.25" stroke="#f3f3f3" stroke-width="1.22"/><rect x="39.00" y="24.68" width="2" height="2" fill="#f3f3f3"/><line x1="53.47" y1="8.97" x2="53.47" y2="17.42" stroke="#c4c0c8" stroke-width="1.08"/><line x1="53.47" y1="18.02" x2="53.47" y2="26.47" stroke="#c4c0c8" stroke-width="1.08"/><line x1="53.00" y1="8.50" x2="53.00" y2="16.95" stroke="#f3f3f3" stroke-width="1.22"/><line x1="53.00" y1="17.55" x2="53.00" y2="26.00" stroke="#f3f3f3" stroke-width="1.22"/><line x1="55.50" y1="8.97" x2="64.15" y2="8.97" stroke="#c4c0c8" stroke-width="1.08"/><line x1="63.47" y1="8.97" x2="63.47" y2="17.42" stroke="#c4c0c8" stroke-width="1.08"/><line x1="56.17" y1="17.72" x2="63.47" y2="17.72" stroke="#c4c0c8" stroke-width="1.08"/><line x1="63.47" y1="18.02" x2="63.47" y2="26.47" stroke="#c4c0c8" stroke-width="1.08"/><line x1="55.50" y1="26.47" x2="64.15" y2="26.47" stroke="#c4c0c8" stroke-width="1.08"/><line x1="55.03" y1="8.50" x2="63.67" y2="8.50" stroke="#f3f3f3" stroke-width="1.22"/><line x1="63.00" y1="8.50" x2="63.00" y2="16.95" stroke="#f3f3f3" stroke-width="1.22"/><line x1="55.70" y1="17.25" x2="63.00" y2="17.25" stroke="#f3f3f3" stroke-width="1.22"/><line x1="63.00" y1="17.55" x2="63.00" y2="26.00" stroke="#f3f3f3" stroke-width="1.22"/><line x1="55.03" y1="26.00" x2="63.67" y2="26.00" stroke="#f3f3f3" stroke-width="1.22"/><line x1="73.47" y1="8.97" x2="73.47" y2="17.42" stroke="#c4c0c8" stroke-width="1.08"/><line x1="73.47" y1="18.02" x2="73.47" y2="26.47" stroke="#c4c0c8" stroke-width="1.08"/><line x1="73.00" y1="8.50" x2="73.00" y2="16.95" stroke="#f3f3f3" stroke-width="1.22"/><line x1="73.00" y1="17.55" x2="73.00" y2="26.00" stroke="#f3f3f3" stroke-width="1.22"/></svg>
<div style="position:absolute;left:54px;top:768px;width:160px;height:31px;box-sizing:border-box;background:#fff"></div>
<div class="t" style="left:53.8px;top:774px;font-size:18.1px;font-weight:normal;font-style:normal;color:#000;">Engraved details</div>
<div style="position:absolute;left:214px;top:768px;width:100px;height:22px;box-sizing:border-box;background:#fff"></div>
<div class="spin" style="left:214px;top:744px;width:71px;height:20px"></div>
<div style="position:absolute;left:263px;top:745px;width:1px;height:18px;background:#cfcfcf"></div>
<div style="position:absolute;left:264px;top:745px;width:20px;height:18px;background:#f9f9f9;border-radius:0 2px 2px 0"></div>
<svg style="position:absolute;left:0;top:0;overflow:visible" width="1" height="1"><polygon points="269.0,753.0 278.0,753.0 273.5,748.0" fill="#6a6a6a"/><polygon points="269.7,756.0 277.3,756.0 273.5,760.0" fill="#b0b0b0"/></svg>
<div class="t" style="left:219px;top:745px;font-size:17.7px;font-weight:normal;font-style:normal;color:#000;">0.00</div>
<div class="t" style="left:215px;top:771px;font-size:14px;font-weight:normal;font-style:italic;color:#000;">*Width (mm)</div>
<div style="position:absolute;left:214px;top:818px;width:100px;height:22px;box-sizing:border-box;background:#fff"></div>
<div class="spin" style="left:214px;top:794px;width:71px;height:20px"></div>
<div style="position:absolute;left:263px;top:795px;width:1px;height:18px;background:#cfcfcf"></div>
<div style="position:absolute;left:264px;top:795px;width:20px;height:18px;background:#f9f9f9;border-radius:0 2px 2px 0"></div>
<svg style="position:absolute;left:0;top:0;overflow:visible" width="1" height="1"><polygon points="269.0,803.0 278.0,803.0 273.5,798.0" fill="#6a6a6a"/><polygon points="269.7,806.0 277.3,806.0 273.5,810.0" fill="#b0b0b0"/></svg>
<div class="t" style="left:219px;top:795px;font-size:17.7px;font-weight:normal;font-style:normal;color:#000;">0.00</div>
<div class="t" style="left:215px;top:821px;font-size:14px;font-weight:normal;font-style:italic;color:#000;">*Depth (mm)</div>
<div style="position:absolute;left:324px;top:793px;width:140px;height:22px;box-sizing:border-box;background:#fff"></div>
<div class="spin" style="left:324px;top:769px;width:91px;height:20px"></div>
<div style="position:absolute;left:393px;top:770px;width:1px;height:18px;background:#cfcfcf"></div>
<div style="position:absolute;left:394px;top:770px;width:20px;height:18px;background:#f9f9f9;border-radius:0 2px 2px 0"></div>
<svg style="position:absolute;left:0;top:0;overflow:visible" width="1" height="1"><polygon points="399.0,778.0 408.0,778.0 403.5,773.0" fill="#6a6a6a"/><polygon points="399.7,781.0 407.3,781.0 403.5,785.0" fill="#b0b0b0"/></svg>
<div class="t" style="left:329px;top:770px;font-size:17.7px;font-weight:normal;font-style:normal;color:#000;">0.0000</div>
<div class="t" style="left:325px;top:796px;font-size:14px;font-weight:normal;font-style:italic;color:#000;">*Mean Error (mm)</div>
<div class="btn" style="left:424px;top:768px;width:75px;height:23px;line-height:23px;font-size:18px;border-radius:3px">ADD</div>
<div style="position:absolute;left:674px;top:758px;width:80px;height:35px;box-sizing:border-box;background:#008000;border:2px solid rgba(0,0,0,0.22)"></div>
<svg style="position:absolute;left:674px;top:758px" width="80" height="35"><line x1="15.50" y1="8.97" x2="24.15" y2="8.97" stroke="#c4c0c8" stroke-width="1.08"/><line x1="23.47" y1="8.97" x2="23.47" y2="17.42" stroke="#c4c0c8" stroke-width="1.08"/><line x1="23.47" y1="18.02" x2="23.47" y2="26.47" stroke="#c4c0c8" stroke-width="1.08"/><line x1="15.50" y1="26.47" x2="24.15" y2="26.47" stroke="#c4c0c8" stroke-width="1.08"/><line x1="16.17" y1="8.97" x2="16.17" y2="17.42" stroke="#c4c0c8" stroke-width="1.08"/><line x1="16.17" y1="17.72" x2="23.47" y2="17.72" stroke="#c4c0c8" stroke-width="1.08"/><line x1="15.02" y1="8.50" x2="23.68" y2="8.50" stroke="#f3f3f3" stroke-width="1.22"/><line x1="23.00" y1="8.50" x2="23.00" y2="16.95" stroke="#f3f3f3" stroke-width="1.22"/><line x1="23.00" y1="17.55" x2="23.00" y2="26.00" stroke="#f3f3f3" stroke-width="1.22"/><line x1="15.02" y1="26.00" x2="23.68" y2="26.00" stroke="#f3f3f3" stroke-width="1.22"/><line x1="15.70" y1="8.50" x2="15.70" y2="16.95" stroke="#f3f3f3" stroke-width="1.22"/><line x1="15.70" y1="17.25" x2="23.00" y2="17.25" stroke="#f3f3f3" stroke-width="1.22"/><line x1="25.50" y1="8.97" x2="34.15" y2="8.97" stroke="#c4c0c8" stroke-width="1.08"/><line x1="33.47" y1="8.97" x2="33.47" y2="17.42" stroke="#c4c0c8" stroke-width="1.08"/><line x1="33.47" y1="18.02" x2="33.47" y2="26.47" stroke="#c4c0c8" stroke-width="1.08"/><line x1="25.50" y1="26.47" x2="34.15" y2="26.47" stroke="#c4c0c8" stroke-width="1.08"/><line x1="26.17" y1="8.97" x2="26.17" y2="17.42" stroke="#c4c0c8" stroke-width="1.08"/><line x1="26.17" y1="17.72" x2="33.47" y2="17.72" stroke="#c4c0c8" stroke-width="1.08"/><line x1="25.02" y1="8.50" x2="33.67" y2="8.50" stroke="#f3f3f3" stroke-width="1.22"/><line x1="33.00" y1="8.50" x2="33.00" y2="16.95" stroke="#f3f3f3" stroke-width="1.22"/><line x1="33.00" y1="17.55" x2="33.00" y2="26.00" stroke="#f3f3f3" stroke-width="1.22"/><line x1="25.02" y1="26.00" x2="33.67" y2="26.00" stroke="#f3f3f3" stroke-width="1.22"/><line x1="25.70" y1="8.50" x2="25.70" y2="16.95" stroke="#f3f3f3" stroke-width="1.22"/><line x1="25.70" y1="17.25" x2="33.00" y2="17.25" stroke="#f3f3f3" stroke-width="1.22"/><rect x="39.00" y="24.68" width="2" height="2" fill="#f3f3f3"/><line x1="45.50" y1="8.97" x2="54.15" y2="8.97" stroke="#c4c0c8" stroke-width="1.08"/><line x1="53.47" y1="8.97" x2="53.47" y2="17.42" stroke="#c4c0c8" stroke-width="1.08"/><line x1="53.47" y1="18.02" x2="53.47" y2="26.47" stroke="#c4c0c8" stroke-width="1.08"/><line x1="45.50" y1="26.47" x2="54.15" y2="26.47" stroke="#c4c0c8" stroke-width="1.08"/><line x1="46.17" y1="18.02" x2="46.17" y2="26.47" stroke="#c4c0c8" stroke-width="1.08"/><line x1="46.17" y1="8.97" x2="46.17" y2="17.42" stroke="#c4c0c8" stroke-width="1.08"/><line x1="46.17" y1="17.72" x2="53.47" y2="17.72" stroke="#c4c0c8" stroke-width="1.08"/><line x1="45.03" y1="8.50" x2="53.67" y2="8.50" stroke="#f3f3f3" stroke-width="1.22"/><line x1="53.00" y1="8.50" x2="53.00" y2="16.95" stroke="#f3f3f3" stroke-width="1.22"/><line x1="53.00" y1="17.55" x2="53.00" y2="26.00" stroke="#f3f3f3" stroke-width="1.22"/><line x1="45.03" y1="26.00" x2="53.67" y2="26.00" stroke="#f3f3f3" stroke-width="1.22"/><line x1="45.70" y1="17.55" x2="45.70" y2="26.00" stroke="#f3f3f3" stroke-width="1.22"/><line x1="45.70" y1="8.50" x2="45.70" y2="16.95" stroke="#f3f3f3" stroke-width="1.22"/><line x1="45.70" y1="17.25" x2="53.00" y2="17.25" stroke="#f3f3f3" stroke-width="1.22"/><line x1="55.50" y1="8.97" x2="64.15" y2="8.97" stroke="#c4c0c8" stroke-width="1.08"/><line x1="56.17" y1="8.97" x2="56.17" y2="17.42" stroke="#c4c0c8" stroke-width="1.08"/><line x1="56.17" y1="17.72" x2="63.47" y2="17.72" stroke="#c4c0c8" stroke-width="1.08"/><line x1="63.47" y1="18.02" x2="63.47" y2="26.47" stroke="#c4c0c8" stroke-width="1.08"/><line x1="55.50" y1="26.47" x2="64.15" y2="26.47" stroke="#c4c0c8" stroke-width="1.08"/><line x1="55.03" y1="8.50" x2="63.67" y2="8.50" stroke="#f3f3f3" stroke-width="1.22"/><line x1="55.70" y1="8.50" x2="55.70" y2="16.95" stroke="#f3f3f3" stroke-width="1.22"/><line x1="55.70" y1="17.25" x2="63.00" y2="17.25" stroke="#f3f3f3" stroke-width="1.22"/><line x1="63.00" y1="17.55" x2="63.00" y2="26.00" stroke="#f3f3f3" stroke-width="1.22"/><line x1="55.03" y1="26.00" x2="63.67" y2="26.00" stroke="#f3f3f3" stroke-width="1.22"/><line x1="65.50" y1="8.97" x2="74.15" y2="8.97" stroke="#c4c0c8" stroke-width="1.08"/><line x1="73.47" y1="8.97" x2="73.47" y2="17.42" stroke="#c4c0c8" stroke-width="1.08"/><line x1="73.47" y1="18.02" x2="73.47" y2="26.47" stroke="#c4c0c8" stroke-width="1.08"/><line x1="65.03" y1="8.50" x2="73.67" y2="8.50" stroke="#f3f3f3" stroke-width="1.22"/><line x1="73.00" y1="8.50" x2="73.00" y2="16.95" stroke="#f3f3f3" stroke-width="1.22"/><line x1="73.00" y1="17.55" x2="73.00" y2="26.00" stroke="#f3f3f3" stroke-width="1.22"/></svg>
<div style="position:absolute;left:54px;top:888px;width:160px;height:31px;box-sizing:border-box;background:#fff"></div>
<div class="t" style="left:53.8px;top:894px;font-size:18.1px;font-weight:normal;font-style:normal;color:#000;">Thin features</div>
<div style="position:absolute;left:214px;top:913px;width:110px;height:22px;box-sizing:border-box;background:#fff"></div>
<div class="spin" style="left:214px;top:889px;width:71px;height:20px"></div>
<div style="position:absolute;left:263px;top:890px;width:1px;height:18px;background:#cfcfcf"></div>
<div style="position:absolute;left:264px;top:890px;width:20px;height:18px;background:#f9f9f9;border-radius:0 2px 2px 0"></div>
<svg style="position:absolute;left:0;top:0;overflow:visible" width="1" height="1"><polygon points="269.0,898.0 278.0,898.0 273.5,893.0" fill="#6a6a6a"/><polygon points="269.7,901.0 277.3,901.0 273.5,905.0" fill="#b0b0b0"/></svg>
<div class="t" style="left:219px;top:890px;font-size:17.7px;font-weight:normal;font-style:normal;color:#000;">0.00</div>
<div class="t" style="left:215px;top:916px;font-size:14px;font-weight:normal;font-style:italic;color:#000;">*Thickness (mm)</div>
<div style="position:absolute;left:324px;top:913px;width:140px;height:22px;box-sizing:border-box;background:#fff"></div>
<div class="spin" style="left:324px;top:889px;width:91px;height:20px"></div>
<div style="position:absolute;left:393px;top:890px;width:1px;height:18px;background:#cfcfcf"></div>
<div style="position:absolute;left:394px;top:890px;width:20px;height:18px;background:#f9f9f9;border-radius:0 2px 2px 0"></div>
<svg style="position:absolute;left:0;top:0;overflow:visible" width="1" height="1"><polygon points="399.0,898.0 408.0,898.0 403.5,893.0" fill="#6a6a6a"/><polygon points="399.7,901.0 407.3,901.0 403.5,905.0" fill="#b0b0b0"/></svg>
<div class="t" style="left:329px;top:890px;font-size:17.7px;font-weight:normal;font-style:normal;color:#000;">0.0000</div>
<div class="t" style="left:325px;top:916px;font-size:14px;font-weight:normal;font-style:italic;color:#000;">*Mean Error (mm)</div>
<div class="btn" style="left:424px;top:888px;width:75px;height:23px;line-height:23px;font-size:18px;border-radius:3px">ADD</div>
<div style="position:absolute;left:679px;top:878px;width:80px;height:35px;box-sizing:border-box;background:#008000;border:2px solid rgba(0,0,0,0.22)"></div>
<svg style="position:absolute;left:679px;top:878px" width="80" height="35"><line x1="15.50" y1="8.97" x2="24.15" y2="8.97" stroke="#c4c0c8" stroke-width="1.08"/><line x1="23.47" y1="8.97" x2="23.47" y2="17.42" stroke="#c4c0c8" stroke-width="1.08"/><line x1="23.47" y1="18.02" x2="23.47" y2="26.47" stroke="#c4c0c8" stroke-width="1.08"/><line x1="15.50" y1="26.47" x2="24.15" y2="26.47" stroke="#c4c0c8" stroke-width="1.08"/><line x1="16.17" y1="8.97" x2="16.17" y2="17.42" stroke="#c4c0c8" stroke-width="1.08"/><line x1="16.17" y1="17.72" x2="23.47" y2="17.72" stroke="#c4c0c8" stroke-width="1.08"/><line x1="15.02" y1="8.50" x2="23.68" y2="8.50" stroke="#f3f3f3" stroke-width="1.22"/><line x1="23.00" y1="8.50" x2="23.00" y2="16.95" stroke="#f3f3f3" stroke-width="1.22"/><line x1="23.00" y1="17.55" x2="23.00" y2="26.00" stroke="#f3f3f3" stroke-width="1.22"/><line x1="15.02" y1="26.00" x2="23.68" y2="26.00" stroke="#f3f3f3" stroke-width="1.22"/><line x1="15.70" y1="8.50" x2="15.70" y2="16.95" stroke="#f3f3f3" stroke-width="1.22"/><line x1="15.70" y1="17.25" x2="23.00" y2="17.25" stroke="#f3f3f3" stroke-width="1.22"/><line x1="25.50" y1="8.97" x2="34.15" y2="8.97" stroke="#c4c0c8" stroke-width="1.08"/><line x1="33.47" y1="8.97" x2="33.47" y2="17.42" stroke="#c4c0c8" stroke-width="1.08"/><line x1="33.47" y1="18.02" x2="33.47" y2="26.47" stroke="#c4c0c8" stroke-width="1.08"/><line x1="25.02" y1="8.50" x2="33.67" y2="8.50" stroke="#f3f3f3" stroke-width="1.22"/><line x1="33.00" y1="8.50" x2="33.00" y2="16.95" stroke="#f3f3f3" stroke-width="1.22"/><line x1="33.00" y1="17.55" x2="33.00" y2="26.00" stroke="#f3f3f3" stroke-width="1.22"/><rect x="39.00" y="24.68" width="2" height="2" fill="#f3f3f3"/><line x1="45.50" y1="8.97" x2="54.15" y2="8.97" stroke="#c4c0c8" stroke-width="1.08"/><line x1="46.17" y1="8.97" x2="46.17" y2="17.42" stroke="#c4c0c8" stroke-width="1.08"/><line x1="46.17" y1="17.72" x2="53.47" y2="17.72" stroke="#c4c0c8" stroke-width="1.08"/><line x1="53.47" y1="18.02" x2="53.47" y2="26.47" stroke="#c4c0c8" stroke-width="1.08"/><line x1="45.50" y1="26.47" x2="54.15" y2="26.47" stroke="#c4c0c8" stroke-width="1.08"/><line x1="45.03" y1="8.50" x2="53.67" y2="8.50" stroke="#f3f3f3" stroke-width="1.22"/><line x1="45.70" y1="8.50" x2="45.70" y2="16.95" stroke="#f3f3f3" stroke-width="1.22"/><line x1="45.70" y1="17.25" x2="53.00" y2="17.25" stroke="#f3f3f3" stroke-width="1.22"/><line x1="53.00" y1="17.55" x2="53.00" y2="26.00" stroke="#f3f3f3" stroke-width="1.22"/><line x1="45.03" y1="26.00" x2="53.67" y2="26.00" stroke="#f3f3f3" stroke-width="1.22"/><line x1="56.17" y1="8.97" x2="56.17" y2="17.42" stroke="#c4c0c8" stroke-width="1.08"/><line x1="56.17" y1="17.72" x2="63.47" y2="17.72" stroke="#c4c0c8" stroke-width="1.08"/><line x1="63.47" y1="8.97" x2="63.47" y2="17.42" stroke="#c4c0c8" stroke-width="1.08"/><line x1="63.47" y1="18.02" x2="63.47" y2="26.47" stroke="#c4c0c8" stroke-width="1.08"/><line x1="55.70" y1="8.50" x2="55.70" y2="16.95" stroke="#f3f3f3" stroke-width="1.22"/><line x1="55.70" y1="17.25" x2="63.00" y2="17.25" stroke="#f3f3f3" stroke-width="1.22"/><line x1="63.00" y1="8.50" x2="63.00" y2="16.95" stroke="#f3f3f3" stroke-width="1.22"/><line x1="63.00" y1="17.55" x2="63.00" y2="26.00" stroke="#f3f3f3" stroke-width="1.22"/><line x1="65.50" y1="8.97" x2="74.15" y2="8.97" stroke="#c4c0c8" stroke-width="1.08"/><line x1="73.47" y1="8.97" x2="73.47" y2="17.42" stroke="#c4c0c8" stroke-width="1.08"/><line x1="73.47" y1="18.02" x2="73.47" y2="26.47" stroke="#c4c0c8" stroke-width="1.08"/><line x1="65.50" y1="26.47" x2="74.15" y2="26.47" stroke="#c4c0c8" stroke-width="1.08"/><line x1="66.17" y1="18.02" x2="66.17" y2="26.47" stroke="#c4c0c8" stroke-width="1.08"/><line x1="66.17" y1="8.97" x2="66.17" y2="17.42" stroke="#c4c0c8" stroke-width="1.08"/><line x1="66.17" y1="17.72" x2="73.47" y2="17.72" stroke="#c4c0c8" stroke-width="1.08"/><line x1="65.03" y1="8.50" x2="73.67" y2="8.50" stroke="#f3f3f3" stroke-width="1.22"/><line x1="73.00" y1="8.50" x2="73.00" y2="16.95" stroke="#f3f3f3" stroke-width="1.22"/><line x1="73.00" y1="17.55" x2="73.00" y2="26.00" stroke="#f3f3f3" stroke-width="1.22"/><line x1="65.03" y1="26.00" x2="73.67" y2="26.00" stroke="#f3f3f3" stroke-width="1.22"/><line x1="65.70" y1="17.55" x2="65.70" y2="26.00" stroke="#f3f3f3" stroke-width="1.22"/><line x1="65.70" y1="8.50" x2="65.70" y2="16.95" stroke="#f3f3f3" stroke-width="1.22"/><line x1="65.70" y1="17.25" x2="73.00" y2="17.25" stroke="#f3f3f3" stroke-width="1.22"/></svg>
<svg style="position:absolute;left:544px;top:138px" width="100" height="90" viewBox="0 0 100 90"><defs><linearGradient id="gh" x1="0" y1="0" x2="0" y2="1"><stop offset="0" stop-color="#dedede"/><stop offset="0.45" stop-color="#f8f8f8"/><stop offset="1" stop-color="#fdfdfd"/></linearGradient></defs><rect x="0" y="0" width="100" height="90" fill="url(#gh)"/><polygon points="85.90,49.90 98.00,49.50 75.10,84.50 63.00,88.60" fill="#6c6c6c" stroke="#6c6c6c" stroke-width="0.5" stroke-linejoin="round"/><polygon points="62.50,58.90 85.90,29.30 85.90,70.00 63.00,88.60" fill="#5c5c5c" stroke="#5c5c5c" stroke-width="0.5" stroke-linejoin="round"/><defs><linearGradient id="h_f" gradientUnits="userSpaceOnUse" x1="0" y1="47" x2="0" y2="88"><stop offset="0" stop-color="#767676"/><stop offset="1" stop-color="#666666"/></linearGradient></defs><polygon points="1.40,46.80 62.50,58.90 63.00,88.60 5.00,73.30" fill="url(#h_f)" stroke="#6e6e6e" stroke-width="0.5" stroke-linejoin="round"/><defs><linearGradient id="h_t" gradientUnits="userSpaceOnUse" x1="33" y1="21" x2="62" y2="59"><stop offset="0" stop-color="#7c7c7c"/><stop offset="1" stop-color="#939393"/></linearGradient></defs><polygon points="1.40,46.80 33.30,21.20 85.90,29.30 62.50,58.90" fill="url(#h_t)" stroke="#888888" stroke-width="0.5" stroke-linejoin="round"/><defs><linearGradient id="h_h" gradientUnits="userSpaceOnUse" x1="35" y1="30" x2="55" y2="44"><stop offset="0" stop-color="#2c2c2c"/><stop offset="1" stop-color="#4a4a4a"/></linearGradient></defs><ellipse cx="45.4" cy="37.3" rx="15.3" ry="7.2" fill="url(#h_h)"/><path d="M30.4,37.3 V9.3 H37.8 M53.5,9.3 H60.5 V37.3" fill="none" stroke="#000" stroke-width="1.3"/><text x="45.2" y="13.2" font-family="Liberation Sans" font-size="10" fill="#111" text-anchor="middle">D</text></svg>
<svg style="position:absolute;left:544px;top:248px" width="100" height="96" viewBox="0 0 100 96"><defs><linearGradient id="gp" x1="0" y1="0" x2="0" y2="1"><stop offset="0" stop-color="#dedede"/><stop offset="0.45" stop-color="#f8f8f8"/><stop offset="1" stop-color="#fdfdfd"/></linearGradient></defs><rect x="0" y="0" width="100" height="96" fill="url(#gp)"/><polygon points="86.20,57.10 97.80,56.10 74.60,90.40 63.10,94.50" fill="#6c6c6c" stroke="#6c6c6c" stroke-width="0.5" stroke-linejoin="round"/><polygon points="62.60,66.30 86.20,36.20 86.20,77.40 63.10,94.50" fill="#5c5c5c" stroke="#5c5c5c" stroke-width="0.5" stroke-linejoin="round"/><defs><linearGradient id="p_f" gradientUnits="userSpaceOnUse" x1="0" y1="53" x2="0" y2="94"><stop offset="0" stop-color="#767676"/><stop offset="1" stop-color="#666666"/></linearGradient></defs><polygon points="1.55,53.40 62.60,66.30 63.10,94.50 5.70,79.70" fill="url(#p_f)" stroke="#6e6e6e" stroke-width="0.5" stroke-linejoin="round"/><defs><linearGradient id="p_t" gradientUnits="userSpaceOnUse" x1="36" y1="31" x2="62" y2="66"><stop offset="0" stop-color="#7c7c7c"/><stop offset="1" stop-color="#939393"/></linearGradient></defs><polygon points="1.55,53.40 36.70,31.20 86.20,36.20 62.60,66.30" fill="url(#p_t)" stroke="#888888" stroke-width="0.5" stroke-linejoin="round"/><ellipse cx="52.5" cy="43.2" rx="16.5" ry="7.4" fill="#474747"/><defs><linearGradient id="p_c" gradientUnits="userSpaceOnUse" x1="28" y1="0" x2="61" y2="0"><stop offset="0" stop-color="#737373"/><stop offset="1" stop-color="#5e5e5e"/></linearGradient></defs><rect x="28.4" y="26.1" width="32.4" height="19.4" fill="url(#p_c)"/><ellipse cx="44.6" cy="45.5" rx="16.2" ry="5.9" fill="url(#p_c)"/><ellipse cx="44.6" cy="26.1" rx="16.2" ry="5.9" fill="#828282"/><path d="M28.4,27.5 V7.4 H36.7 M52,7.4 H60.5 V27.5" fill="none" stroke="#000" stroke-width="1.3"/><text x="44.3" y="11.9" font-family="Liberation Sans" font-size="10" fill="#111" text-anchor="middle">D</text></svg>
<svg style="position:absolute;left:544px;top:368px" width="100" height="100" viewBox="0 0 100 100"><defs><linearGradient id="gs" x1="0" y1="0" x2="0" y2="1"><stop offset="0" stop-color="#dedede"/><stop offset="0.45" stop-color="#f8f8f8"/><stop offset="1" stop-color="#fdfdfd"/></linearGradient></defs><rect x="0" y="0" width="100" height="100" fill="url(#gs)"/><polygon points="80.00,63.00 87.00,63.00 87.50,75.50 83.00,77.50" fill="#656565" stroke="#656565" stroke-width="0.5" stroke-linejoin="round"/><polygon points="86.00,60.40 99.80,63.30 99.80,70.50 86.00,76.00" fill="#707070" stroke="#707070" stroke-width="0.5" stroke-linejoin="round"/><polygon points="1.80,66.70 38.00,53.00 86.00,64.00 83.00,67.60 48.90,85.90" fill="#858585" stroke="#858585" stroke-width="0.5" stroke-linejoin="round"/><polygon points="1.80,66.70 48.90,85.90 48.90,98.40 2.25,76.80" fill="#6e6e6e" stroke="#6e6e6e" stroke-width="0.5" stroke-linejoin="round"/><polygon points="48.90,85.90 83.00,67.60 86.50,75.50 48.90,98.40" fill="#5b5b5b" stroke="#5b5b5b" stroke-width="0.5" stroke-linejoin="round"/><polygon points="37.30,18.10 88.80,26.80 86.00,70.00 61.40,61.40 37.30,57.00" fill="#7e7e7e" stroke="#7e7e7e" stroke-width="0.5" stroke-linejoin="round"/><polygon points="85.00,28.20 88.80,26.80 87.00,72.00 83.00,70.00" fill="#6a6a6a" stroke="#6a6a6a" stroke-width="0.5" stroke-linejoin="round"/><polygon points="20.00,33.00 25.30,34.00 25.80,75.30 20.50,72.00" fill="#7a7a7a" stroke="#7a7a7a" stroke-width="0.5" stroke-linejoin="round"/><defs><linearGradient id="s_w" gradientUnits="userSpaceOnUse" x1="40" y1="30" x2="50" y2="72"><stop offset="0" stop-color="#555555"/><stop offset="1" stop-color="#3e3e3e"/></linearGradient></defs><polygon points="25.30,34.00 60.60,23.90 60.60,61.40 25.80,75.30" fill="url(#s_w)" stroke="#4a4a4a" stroke-width="0.5" stroke-linejoin="round"/><path d="M20.5,33 V22.4 H25.6 V33" fill="none" stroke="#000" stroke-width="1.3"/><text x="22.2" y="17.8" font-family="Liberation Sans" font-size="10" fill="#111" text-anchor="middle">t</text></svg>
<svg style="position:absolute;left:544px;top:488px" width="100" height="100" viewBox="0 0 100 100"><defs><linearGradient id="gu" x1="0" y1="0" x2="0" y2="1"><stop offset="0" stop-color="#dedede"/><stop offset="0.45" stop-color="#f8f8f8"/><stop offset="1" stop-color="#fdfdfd"/></linearGradient></defs><rect x="0" y="0" width="100" height="100" fill="url(#gu)"/><polygon points="94.00,72.50 98.80,73.20 94.00,76.50" fill="#6a6a6a" stroke="#6a6a6a" stroke-width="0.5" stroke-linejoin="round"/><polygon points="1.30,69.00 24.60,61.20 31.00,58.50 68.60,58.50 94.00,63.30 60.40,85.90" fill="#868686" stroke="#868686" stroke-width="0.5" stroke-linejoin="round"/><polygon points="1.30,69.00 60.40,85.90 60.40,97.90 1.80,82.00" fill="#6e6e6e" stroke="#6e6e6e" stroke-width="0.5" stroke-linejoin="round"/><polygon points="60.40,85.90 94.00,63.30 94.00,73.90 60.40,97.90" fill="#5b5b5b" stroke="#5b5b5b" stroke-width="0.5" stroke-linejoin="round"/><polygon points="24.40,24.40 30.60,24.80 31.10,75.30 24.80,61.40" fill="#7a7a7a" stroke="#7a7a7a" stroke-width="0.5" stroke-linejoin="round"/><polygon points="30.60,24.80 68.60,17.60 68.60,59.00 31.10,75.30" fill="#4b4b4b" stroke="#4b4b4b" stroke-width="0.5" stroke-linejoin="round"/><path d="M24.4,24.4 V16.2 H30.6 V24.4" fill="none" stroke="#000" stroke-width="1.3"/><text x="27.8" y="12.6" font-family="Liberation Sans" font-size="10" fill="#111" text-anchor="middle">t</text></svg>
<svg style="position:absolute;left:544px;top:608px" width="100" height="100" viewBox="0 0 100 100"><defs><linearGradient id="ge" x1="0" y1="0" x2="0" y2="1"><stop offset="0" stop-color="#dedede"/><stop offset="0.45" stop-color="#f8f8f8"/><stop offset="1" stop-color="#fdfdfd"/></linearGradient></defs><rect x="0" y="0" width="100" height="100" fill="url(#ge)"/><polygon points="86.40,65.70 93.10,65.70 99.80,79.70 99.80,92.20 87.30,97.90 86.40,97.90" fill="#5d5d5d" stroke="#5d5d5d" stroke-width="0.5" stroke-linejoin="round"/><polygon points="1.30,55.10 12.80,38.30 79.70,38.30 86.40,55.10" fill="#7c7c7c" stroke="#7c7c7c" stroke-width="0.5" stroke-linejoin="round"/><polygon points="15.70,38.30 23.90,23.90 36.40,23.90 33.50,38.30" fill="#7d7d7d" stroke="#7d7d7d" stroke-width="0.5" stroke-linejoin="round"/><polygon points="52.30,38.30 53.20,23.90 65.70,23.90 69.60,38.30" fill="#7d7d7d" stroke="#7d7d7d" stroke-width="0.5" stroke-linejoin="round"/><polygon points="33.50,38.30 36.40,23.90 36.40,38.30" fill="#5a5a5a" stroke="#5a5a5a" stroke-width="0.5" stroke-linejoin="round"/><polygon points="15.70,38.30 33.50,38.30 33.50,55.10 15.70,55.10" fill="#747474" stroke="#747474" stroke-width="0.5" stroke-linejoin="round"/><polygon points="52.30,38.30 69.60,38.30 69.60,55.10 52.30,55.10" fill="#747474" stroke="#747474" stroke-width="0.5" stroke-linejoin="round"/><polygon points="33.50,38.30 42.60,38.30 41.20,53.70 33.50,55.10" fill="#363636" stroke="#363636" stroke-width="0.5" stroke-linejoin="round"/><polygon points="69.60,38.30 72.90,38.30 77.70,52.70 70.00,53.70" fill="#383838" stroke="#383838" stroke-width="0.5" stroke-linejoin="round"/><polygon points="1.30,55.10 86.40,55.10 86.40,97.90 3.20,98.40" fill="#6d6d6d" stroke="#6d6d6d" stroke-width="0.5" stroke-linejoin="round"/><path d="M52.25,38.3 V10.2 H56.1 M66.2,10.2 H69.6 V37.3 H92.2 V55.1 H70" fill="none" stroke="#000" stroke-width="1.3"/><text x="61" y="13.5" font-family="Liberation Sans" font-size="11" fill="#1a1a28" text-anchor="middle">w</text><text x="93.2" y="51" font-family="Liberation Sans" font-size="11" fill="#201010" text-anchor="start">h</text></svg>
<svg style="position:absolute;left:544px;top:728px" width="100" height="100" viewBox="0 0 100 100"><defs><linearGradient id="gn" x1="0" y1="0" x2="0" y2="1"><stop offset="0" stop-color="#dedede"/><stop offset="0.45" stop-color="#f8f8f8"/><stop offset="1" stop-color="#fdfdfd"/></linearGradient></defs><rect x="0" y="0" width="100" height="100" fill="url(#gn)"/><polygon points="86.40,65.70 93.10,65.70 99.80,79.70 99.80,92.20 87.30,97.90 86.40,97.90" fill="#5d5d5d" stroke="#5d5d5d" stroke-width="0.5" stroke-linejoin="round"/><polygon points="1.30,55.10 12.80,38.30 79.70,38.30 86.40,55.10" fill="#7c7c7c" stroke="#7c7c7c" stroke-width="0.5" stroke-linejoin="round"/><polygon points="15.70,38.30 23.90,23.90 36.40,23.90 33.50,38.30" fill="#7d7d7d" stroke="#7d7d7d" stroke-width="0.5" stroke-linejoin="round"/><polygon points="52.30,38.30 53.20,23.90 65.70,23.90 69.60,38.30" fill="#7d7d7d" stroke="#7d7d7d" stroke-width="0.5" stroke-linejoin="round"/><polygon points="33.50,38.30 36.40,23.90 36.40,38.30" fill="#5a5a5a" stroke="#5a5a5a" stroke-width="0.5" stroke-linejoin="round"/><polygon points="15.70,38.30 33.50,38.30 33.50,55.10 15.70,55.10" fill="#747474" stroke="#747474" stroke-width="0.5" stroke-linejoin="round"/><polygon points="52.30,38.30 69.60,38.30 69.60,55.10 52.30,55.10" fill="#747474" stroke="#747474" stroke-width="0.5" stroke-linejoin="round"/><polygon points="33.50,38.30 42.60,38.30 41.20,53.70 33.50,55.10" fill="#363636" stroke="#363636" stroke-width="0.5" stroke-linejoin="round"/><polygon points="69.60,38.30 72.90,38.30 77.70,52.70 70.00,53.70" fill="#383838" stroke="#383838" stroke-width="0.5" stroke-linejoin="round"/><polygon points="1.30,55.10 86.40,55.10 86.40,97.90 3.20,98.40" fill="#6d6d6d" stroke="#6d6d6d" stroke-width="0.5" stroke-linejoin="round"/><rect x="37.3" y="10.2" width="15" height="27.6" fill="#fbfbfb"/><path d="M37.3,37.8 V10.2 H40.5 M48.8,10.2 H52.25 V37.3 H91.7 V55.1 H52.25" fill="none" stroke="#000" stroke-width="1.3"/><text x="45" y="13.5" font-family="Liberation Sans" font-size="11" fill="#1a1a28" text-anchor="middle">w</text><text x="88.8" y="49.5" font-family="Liberation Sans" font-size="11" fill="#201010" text-anchor="start">d</text></svg>
<svg style="position:absolute;left:544px;top:848px" width="100" height="100" viewBox="0 0 100 100"><defs><linearGradient id="gt" x1="0" y1="0" x2="0" y2="1"><stop offset="0" stop-color="#dedede"/><stop offset="0.45" stop-color="#f8f8f8"/><stop offset="1" stop-color="#fdfdfd"/></linearGradient></defs><rect x="0" y="0" width="100" height="100" fill="url(#gt)"/><polygon points="83.50,60.40 99.80,50.30 99.80,55.10 51.80,75.80 51.80,70.00" fill="#5a5a5a" stroke="#5a5a5a" stroke-width="0.5" stroke-linejoin="round"/><polygon points="51.80,58.50 83.50,48.40 83.50,60.40 51.80,72.90" fill="#363636" stroke="#363636" stroke-width="0.5" stroke-linejoin="round"/><polygon points="76.80,50.50 83.50,48.40 83.50,60.40 76.80,62.30" fill="#262626" stroke="#262626" stroke-width="0.5" stroke-linejoin="round"/><polygon points="13.80,49.50 35.40,55.50 35.40,65.20 13.80,56.00" fill="#2e2e2e" stroke="#2e2e2e" stroke-width="0.5" stroke-linejoin="round"/><polygon points="6.10,43.10 13.80,47.00 13.80,55.60 6.10,57.50" fill="#3a3a3a" stroke="#3a3a3a" stroke-width="0.5" stroke-linejoin="round"/><defs><linearGradient id="t_t" gradientUnits="userSpaceOnUse" x1="48" y1="11" x2="43" y2="27"><stop offset="0" stop-color="#777777"/><stop offset="1" stop-color="#858585"/></linearGradient></defs><polygon points="1.30,17.20 48.40,10.90 93.60,18.10 43.10,27.25" fill="url(#t_t)" stroke="#7e7e7e" stroke-width="0.5" stroke-linejoin="round"/><polygon points="1.30,17.20 43.10,27.25 43.10,75.80 35.40,72.90 35.40,50.20 6.10,43.10 6.10,57.50 1.80,55.60" fill="#727272" stroke="#727272" stroke-width="0.5" stroke-linejoin="round"/><polygon points="43.10,27.25 93.60,18.10 93.10,57.50 83.50,60.40 83.50,48.40 51.80,58.50 51.80,72.90 43.10,75.80" fill="#595959" stroke="#595959" stroke-width="0.5" stroke-linejoin="round"/><path d="M42.2,75.8 V86.4 H51.6 V75.8" fill="none" stroke="#000" stroke-width="1.3"/><text x="46.2" y="96" font-family="Liberation Sans" font-size="11" fill="#201010" text-anchor="middle">t</text></svg>
<div class="t" style="left:856px;top:111px;font-size:18px;font-weight:normal;font-style:normal;color:#000;">Global Characteristics</div>
<div style="position:absolute;left:855px;top:133px;width:479px;height:86px;box-sizing:border-box;border:1px solid #dcdcdc;border-radius:3px;background:#fafafa"></div>
<div style="position:absolute;left:864px;top:133px;width:100px;height:31px;box-sizing:border-box;background:#fff"></div>
<div class="t" style="left:863.6px;top:139px;font-size:18px;font-weight:normal;font-style:normal;color:#000;">CAD area</div>
<div style="position:absolute;left:864px;top:178px;width:100px;height:31px;box-sizing:border-box;background:#fff"></div>
<div class="t" style="left:863.6px;top:184px;font-size:18px;font-weight:normal;font-style:normal;color:#000;">STL area</div>
<div class="spin" style="left:1084px;top:139px;width:106px;height:20px"></div>
<div style="position:absolute;left:1168px;top:140px;width:1px;height:18px;background:#cfcfcf"></div>
<div style="position:absolute;left:1169px;top:140px;width:20px;height:18px;background:#f9f9f9;border-radius:0 2px 2px 0"></div>
<svg style="position:absolute;left:0;top:0;overflow:visible" width="1" height="1"><polygon points="1174.0,148.0 1183.0,148.0 1178.5,143.0" fill="#6a6a6a"/><polygon points="1174.7,151.0 1182.3,151.0 1178.5,155.0" fill="#b0b0b0"/></svg>
<div class="t" style="left:1089px;top:140px;font-size:17.7px;font-weight:normal;font-style:normal;color:#000;">0.00000</div>
<div class="btn" style="left:1193px;top:138px;width:75px;height:23px;line-height:23px;font-size:18px;border-radius:3px">ADD</div>
<div class="spin" style="left:1082px;top:184px;width:106px;height:20px"></div>
<div style="position:absolute;left:1166px;top:185px;width:1px;height:18px;background:#cfcfcf"></div>
<div style="position:absolute;left:1167px;top:185px;width:20px;height:18px;background:#f9f9f9;border-radius:0 2px 2px 0"></div>
<svg style="position:absolute;left:0;top:0;overflow:visible" width="1" height="1"><polygon points="1172.0,193.0 1181.0,193.0 1176.5,188.0" fill="#6a6a6a"/><polygon points="1172.7,196.0 1180.3,196.0 1176.5,200.0" fill="#b0b0b0"/></svg>
<div class="t" style="left:1087px;top:185px;font-size:17.7px;font-weight:normal;font-style:normal;color:#000;">0.00000</div>
<div class="btn" style="left:1193px;top:183px;width:75px;height:23px;line-height:23px;font-size:18px;border-radius:3px">ADD</div>
<div style="position:absolute;left:1294px;top:138px;width:24px;height:24px;box-sizing:border-box;background:#fff"></div>
<div style="position:absolute;left:1294px;top:183px;width:24px;height:24px;box-sizing:border-box;background:#fff"></div>
<div style="position:absolute;left:854px;top:248px;width:480px;height:500px;box-sizing:border-box;border:1px solid #adadad;background:#fff"></div>
<div style="position:absolute;left:855px;top:249px;width:457px;height:31px;box-sizing:border-box;background:linear-gradient(#ffffff,#f7f7f7);border-bottom:1px solid #a9a9a9"></div>
<div class="t" style="left:858px;top:255px;font-size:18px;font-weight:normal;font-style:normal;color:#000;">Printability Inputs :</div>
<div style="position:absolute;left:855px;top:280px;width:457px;height:25px;box-sizing:border-box;background:#efefef"></div>
<div style="position:absolute;left:855px;top:280px;width:457px;height:467px;overflow:hidden">
<div class="t" style="left:33px;top:4px;font-size:17.6px;font-weight:bold">Part Characteristics</div>
<div class="t" style="left:63px;top:29px;font-size:17.6px;font-weight:bold">Holes</div>
<div class="t" style="left:93px;top:54px;font-size:18.1px;">4&nbsp;&nbsp;(+- 0.09499)</div>
<div class="t" style="left:63px;top:79px;font-size:17.6px;font-weight:bold">Pins</div>
<div class="t" style="left:93px;top:104px;font-size:18.1px;">5&nbsp;&nbsp;(+- 0.031477)</div>
<div class="t" style="left:93px;top:129px;font-size:18.1px;">2.0&nbsp;&nbsp;(+- 0.0354)</div>
<div class="t" style="left:63px;top:154px;font-size:17.6px;font-weight:bold">Supported walls</div>
<div class="t" style="left:93px;top:179px;font-size:18.1px;">5&nbsp;&nbsp;(+- 0.055032)</div>
<div class="t" style="left:63px;top:204px;font-size:17.6px;font-weight:bold">Unsupported walls</div>
<div class="t" style="left:93px;top:229px;font-size:18.1px;">6.5&nbsp;&nbsp;(+- 0.055931)</div>
<div class="t" style="left:93px;top:254px;font-size:18.1px;">7&nbsp;&nbsp;(+- 0.046032)</div>
<div class="t" style="left:63px;top:279px;font-size:17.6px;font-weight:bold">Embossed details</div>
<div class="t" style="left:93px;top:304px;font-size:18.1px;">1.5 / 1.5&nbsp;&nbsp;(+- 0.096416)</div>
<div class="t" style="left:63px;top:329px;font-size:17.6px;font-weight:bold">Engraved details</div>
<div class="t" style="left:93px;top:354px;font-size:18.1px;">2 / 2&nbsp;&nbsp;(+- 0.095959)</div>
<div class="t" style="left:63px;top:379px;font-size:17.6px;font-weight:bold">Thin features</div>
<div class="t" style="left:93px;top:404px;font-size:18.1px;">5&nbsp;&nbsp;(+- 0.043789)</div>
<div class="t" style="left:33px;top:429px;font-size:17.6px;font-weight:bold">Global Characteristics</div>
<div class="t" style="left:63px;top:454px;font-size:17.6px;font-weight:bold">CAD area</div>
<svg style="position:absolute;left:0;top:0" width="457" height="467"><polygon points="9.5,9 20.5,9 15.0,15.5" fill="#6a6a6a"/><polygon points="39.5,34 50.5,34 45.0,40.5" fill="#6a6a6a"/><polygon points="39.5,84 50.5,84 45.0,90.5" fill="#6a6a6a"/><polygon points="39.5,159 50.5,159 45.0,165.5" fill="#6a6a6a"/><polygon points="39.5,209 50.5,209 45.0,215.5" fill="#6a6a6a"/><polygon points="39.5,284 50.5,284 45.0,290.5" fill="#6a6a6a"/><polygon points="39.5,334 50.5,334 45.0,340.5" fill="#6a6a6a"/><polygon points="39.5,384 50.5,384 45.0,390.5" fill="#6a6a6a"/><polygon points="9.5,434 20.5,434 15.0,440.5" fill="#6a6a6a"/></svg>
</div>
<svg style="position:absolute;left:0;top:0;overflow:visible" width="1" height="1"><line x1="1332" y1="249" x2="1332" y2="680" stroke="#6d6d6d" stroke-width="2"/><line x1="1312" y1="269.5" x2="1333" y2="269.5" stroke="#6d6d6d" stroke-width="2"/><line x1="1312" y1="679.5" x2="1333" y2="679.5" stroke="#6d6d6d" stroke-width="2"/><line x1="1332" y1="726" x2="1332" y2="747" stroke="#6d6d6d" stroke-width="2"/><line x1="1312" y1="746.5" x2="1333" y2="746.5" stroke="#6d6d6d" stroke-width="2"/><polygon points="1316.5,262.5 1327.5,262.5 1322,256.5" fill="#606060"/><polygon points="1317,733 1328,733 1322.5,739" fill="#606060"/></svg>
<div style="position:absolute;left:1272px;top:696px;width:33px;height:33px;box-sizing:border-box;border:1px solid #c4c4c4;border-radius:4px;background:linear-gradient(#fff,#f7f7f7)"></div>
<svg style="position:absolute;left:0;top:0;overflow:visible" width="1" height="1" fill="none" stroke="#222" stroke-width="1.3"><rect x="1278" y="703.2" width="20.5" height="4" rx="2"/><path d="M1285.5,703 a2.8,2.5 0 0 1 5.6,0"/><path d="M1280.2,709 v11 a3,3 0 0 0 3,3 h10 a3,3 0 0 0 3,-3 v-11"/><line x1="1284.5" y1="710.5" x2="1284.5" y2="720.5"/><line x1="1288.2" y1="710.5" x2="1288.2" y2="720.5"/><line x1="1292" y1="710.5" x2="1292" y2="720.5"/></svg>
<div class="t" style="left:853px;top:774px;font-size:18px;font-weight:bold;font-style:normal;color:#000;letter-spacing:0.03px">Printing technology</div>
<div class="t" style="left:853px;top:844px;font-size:18px;font-weight:bold;font-style:normal;color:#000;letter-spacing:0.1px">Application</div>
<div class="t" style="left:853px;top:915px;font-size:18px;font-weight:bold;font-style:normal;color:#000;letter-spacing:0.2px">PRINTABILITY SCORE (%) :</div>
<div style="position:absolute;left:1094px;top:773px;width:240px;height:22px;box-sizing:border-box;border:1px solid #b4b4b4;border-radius:3px;background:linear-gradient(#fff,#f8f8f8);overflow:hidden"><div class="t" style="left:4.7px;top:1.3px;font-size:17.7px">Binder Jetting</div></div>
<svg style="position:absolute;left:0;top:0;overflow:visible" width="1" height="1"><polygon points="1311,781 1323,781 1317,787" fill="#606060"/></svg>
<div style="position:absolute;left:1094px;top:843px;width:240px;height:22px;box-sizing:border-box;border:1px solid #b4b4b4;border-radius:3px;background:linear-gradient(#fff,#f8f8f8);overflow:hidden"><div class="t" style="left:4.7px;top:1.3px;font-size:17.7px">Biomedical</div></div>
<svg style="position:absolute;left:0;top:0;overflow:visible" width="1" height="1"><polygon points="1311,851 1323,851 1317,857" fill="#606060"/></svg>
<div style="position:absolute;left:1214px;top:908px;width:104px;height:41px;box-sizing:border-box;background:#ff0000;border:2px solid rgba(0,0,0,0.22)"></div>
<svg style="position:absolute;left:1214px;top:908px" width="104" height="41"><line x1="19.07" y1="9.77" x2="30.27" y2="9.77" stroke="#c4c0c8" stroke-width="1.76"/><line x1="29.17" y1="9.77" x2="29.17" y2="20.77" stroke="#c4c0c8" stroke-width="1.76"/><line x1="20.17" y1="21.07" x2="29.17" y2="21.07" stroke="#c4c0c8" stroke-width="1.76"/><line x1="29.17" y1="21.37" x2="29.17" y2="32.37" stroke="#c4c0c8" stroke-width="1.76"/><line x1="19.07" y1="32.37" x2="30.27" y2="32.37" stroke="#c4c0c8" stroke-width="1.76"/><line x1="18.30" y1="9.00" x2="29.50" y2="9.00" stroke="#f3f3f3" stroke-width="1.98"/><line x1="28.40" y1="9.00" x2="28.40" y2="20.00" stroke="#f3f3f3" stroke-width="1.98"/><line x1="19.40" y1="20.30" x2="28.40" y2="20.30" stroke="#f3f3f3" stroke-width="1.98"/><line x1="28.40" y1="20.60" x2="28.40" y2="31.60" stroke="#f3f3f3" stroke-width="1.98"/><line x1="18.30" y1="31.60" x2="29.50" y2="31.60" stroke="#f3f3f3" stroke-width="1.98"/><line x1="33.07" y1="9.77" x2="44.27" y2="9.77" stroke="#c4c0c8" stroke-width="1.76"/><line x1="34.17" y1="9.77" x2="34.17" y2="20.77" stroke="#c4c0c8" stroke-width="1.76"/><line x1="34.17" y1="21.07" x2="43.17" y2="21.07" stroke="#c4c0c8" stroke-width="1.76"/><line x1="34.17" y1="21.37" x2="34.17" y2="32.37" stroke="#c4c0c8" stroke-width="1.76"/><line x1="33.07" y1="32.37" x2="44.27" y2="32.37" stroke="#c4c0c8" stroke-width="1.76"/><line x1="43.17" y1="21.37" x2="43.17" y2="32.37" stroke="#c4c0c8" stroke-width="1.76"/><line x1="32.30" y1="9.00" x2="43.50" y2="9.00" stroke="#f3f3f3" stroke-width="1.98"/><line x1="33.40" y1="9.00" x2="33.40" y2="20.00" stroke="#f3f3f3" stroke-width="1.98"/><line x1="33.40" y1="20.30" x2="42.40" y2="20.30" stroke="#f3f3f3" stroke-width="1.98"/><line x1="33.40" y1="20.60" x2="33.40" y2="31.60" stroke="#f3f3f3" stroke-width="1.98"/><line x1="32.30" y1="31.60" x2="43.50" y2="31.60" stroke="#f3f3f3" stroke-width="1.98"/><line x1="42.40" y1="20.60" x2="42.40" y2="31.60" stroke="#f3f3f3" stroke-width="1.98"/><rect x="52.10" y="29.70" width="3" height="3" fill="#f3f3f3"/><line x1="61.07" y1="9.77" x2="72.27" y2="9.77" stroke="#c4c0c8" stroke-width="1.76"/><line x1="71.17" y1="9.77" x2="71.17" y2="20.77" stroke="#c4c0c8" stroke-width="1.76"/><line x1="62.17" y1="21.07" x2="71.17" y2="21.07" stroke="#c4c0c8" stroke-width="1.76"/><line x1="71.17" y1="21.37" x2="71.17" y2="32.37" stroke="#c4c0c8" stroke-width="1.76"/><line x1="61.07" y1="32.37" x2="72.27" y2="32.37" stroke="#c4c0c8" stroke-width="1.76"/><line x1="60.30" y1="9.00" x2="71.50" y2="9.00" stroke="#f3f3f3" stroke-width="1.98"/><line x1="70.40" y1="9.00" x2="70.40" y2="20.00" stroke="#f3f3f3" stroke-width="1.98"/><line x1="61.40" y1="20.30" x2="70.40" y2="20.30" stroke="#f3f3f3" stroke-width="1.98"/><line x1="70.40" y1="20.60" x2="70.40" y2="31.60" stroke="#f3f3f3" stroke-width="1.98"/><line x1="60.30" y1="31.60" x2="71.50" y2="31.60" stroke="#f3f3f3" stroke-width="1.98"/><line x1="85.17" y1="9.77" x2="85.17" y2="20.77" stroke="#c4c0c8" stroke-width="1.76"/><line x1="85.17" y1="21.37" x2="85.17" y2="32.37" stroke="#c4c0c8" stroke-width="1.76"/><line x1="84.40" y1="9.00" x2="84.40" y2="20.00" stroke="#f3f3f3" stroke-width="1.98"/><line x1="84.40" y1="20.60" x2="84.40" y2="31.60" stroke="#f3f3f3" stroke-width="1.98"/><line x1="89.07" y1="9.77" x2="100.27" y2="9.77" stroke="#c4c0c8" stroke-width="1.76"/><line x1="99.17" y1="9.77" x2="99.17" y2="20.77" stroke="#c4c0c8" stroke-width="1.76"/><line x1="99.17" y1="21.37" x2="99.17" y2="32.37" stroke="#c4c0c8" stroke-width="1.76"/><line x1="89.07" y1="32.37" x2="100.27" y2="32.37" stroke="#c4c0c8" stroke-width="1.76"/><line x1="90.17" y1="9.77" x2="90.17" y2="20.77" stroke="#c4c0c8" stroke-width="1.76"/><line x1="90.17" y1="21.07" x2="99.17" y2="21.07" stroke="#c4c0c8" stroke-width="1.76"/><line x1="88.30" y1="9.00" x2="99.50" y2="9.00" stroke="#f3f3f3" stroke-width="1.98"/><line x1="98.40" y1="9.00" x2="98.40" y2="20.00" stroke="#f3f3f3" stroke-width="1.98"/><line x1="98.40" y1="20.60" x2="98.40" y2="31.60" stroke="#f3f3f3" stroke-width="1.98"/><line x1="88.30" y1="31.60" x2="99.50" y2="31.60" stroke="#f3f3f3" stroke-width="1.98"/><line x1="89.40" y1="9.00" x2="89.40" y2="20.00" stroke="#f3f3f3" stroke-width="1.98"/><line x1="89.40" y1="20.30" x2="98.40" y2="20.30" stroke="#f3f3f3" stroke-width="1.98"/></svg>
<div class="btn" style="left:914px;top:988px;width:181px;height:51px;line-height:51px;font-size:18px;border-radius:3px">Load</div>
<div class="btn" style="left:1114px;top:988px;width:181px;height:51px;line-height:51px;font-size:18px;border-radius:3px">Save</div>
</body></html>
